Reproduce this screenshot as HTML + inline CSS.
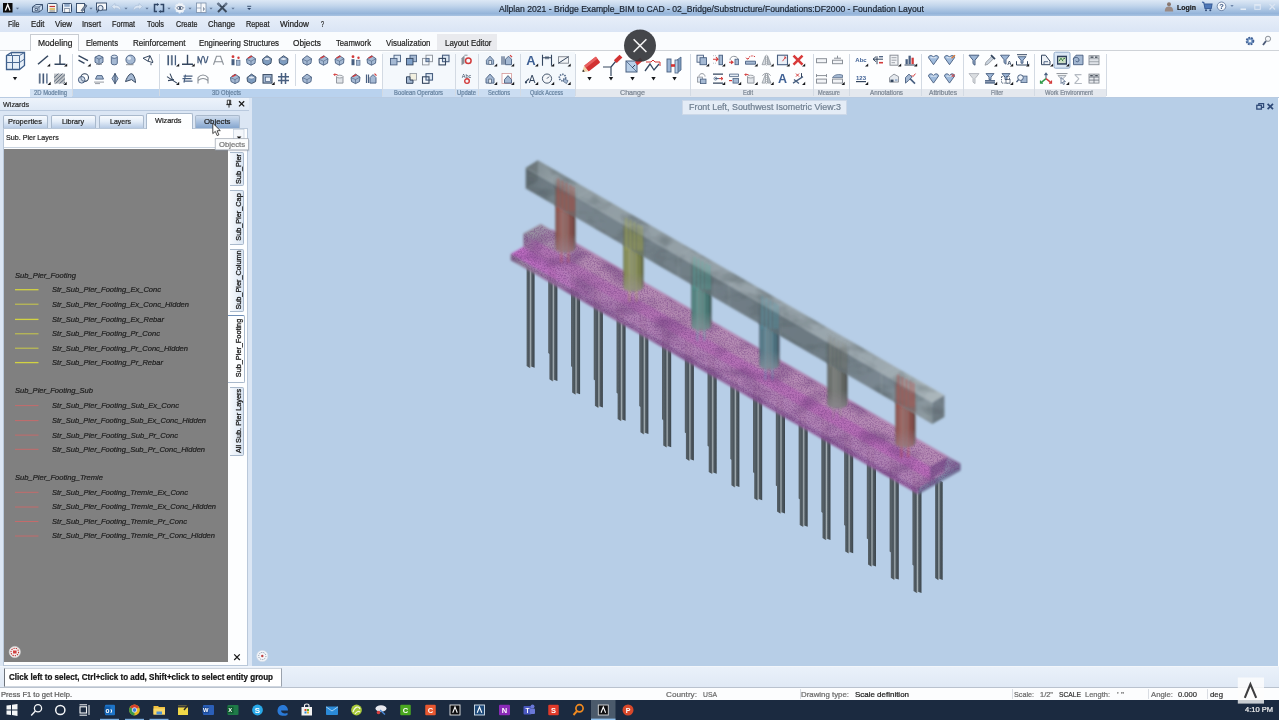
<!DOCTYPE html>
<html><head><meta charset="utf-8"><title>Allplan 2021</title>
<style>
html,body{margin:0;padding:0;}
body{width:1279px;height:720px;overflow:hidden;position:relative;background:#fff;font-family:"Liberation Sans", sans-serif;}
.t{position:absolute;white-space:pre;transform-origin:left center;-webkit-text-stroke:0.22px currentColor;}
.a{position:absolute;}

#title{left:0;top:0;width:1279px;height:16px;background:linear-gradient(#dde8f5 0%,#c3d6ec 35%,#94b4da 85%,#a9c3e2 100%);}
#menu{left:0;top:16px;width:1279px;height:16px;background:linear-gradient(#e7eef9,#dae5f5);}
#tabrow{left:0;top:32px;width:1279px;height:19px;background:#fafcfe;border-bottom:1px solid #cfd3d8;box-sizing:border-box;}
#ribbon{left:0;top:51px;width:1279px;height:46px;background:#fdfeff;}
#riblabel1{left:30px;top:89px;width:42px;height:8px;background:#d2e2f4;}
#riblabel1b{left:72px;top:89px;width:310px;height:8px;background:#b9d2ee;}
#riblabel1c{left:382px;top:89px;width:193px;height:8px;background:#cbddf2;}
#grpbg{left:382px;top:52px;width:193px;height:37px;background:#f4f8fc;}
#riblabel2{left:575px;top:89px;width:531px;height:8px;background:#e4e8ee;}
#ribbot{left:0;top:97px;width:1279px;height:1px;background:#b8cbe2;}
.sep{position:absolute;top:54px;width:1px;height:42px;background:#d3dae3;}
#tabM{left:30px;top:34px;width:49px;height:17px;background:#fdfeff;border:1px solid #c8ccd2;border-bottom:none;box-sizing:border-box;}
#tabL{left:437px;top:34px;width:60px;height:16px;background:#e9eaee;}
#view{left:251.5px;top:98px;width:1026.5px;height:567.7px;background:#b7cee7;}
#viewlbl{left:682px;top:99.5px;width:165px;height:15px;background:#e4ecf6;border:1px solid #ccd8e8;box-sizing:border-box;}
#panel{left:0;top:98px;width:252px;height:570px;background:#dbe6f4;}
#phead{left:0;top:98px;width:248.5px;height:12.5px;background:linear-gradient(#edf3fb,#dfe9f6);border-bottom:1px solid #b9c9de;box-sizing:border-box;}
#pbody{left:3px;top:128px;width:244.5px;height:538px;background:#fdfeff;border:1px solid #b9c8da;box-sizing:border-box;}
.ptab{position:absolute;top:115px;height:13px;border:1px solid #a9b9cc;border-bottom:none;border-radius:2px 2px 0 0;box-sizing:border-box;background:linear-gradient(#f8fbfe 0%,#e4edf8 45%,#b7cbe5 100%);}
#gray{left:4px;top:149px;width:224px;height:513px;background:#808080;}
#drop{left:4px;top:129px;width:240px;height:18px;background:#fff;border-bottom:1px solid #c9d3df;}
.vtab{position:absolute;left:230px;width:14px;border:1px solid #a9b9cc;border-left:none;border-radius:0 2px 2px 0;box-sizing:border-box;background:#fbfcfe;}
.vt{position:absolute;white-space:pre;font-size:7.3px;color:#1c1c1c;transform-origin:left top;-webkit-text-stroke:0.3px #1c1c1c;}
#status{left:0;top:665.7px;width:1279px;height:21.3px;background:linear-gradient(#eaf1fa,#e0e9f5);border-top:1.5px solid #f2f6fb;box-sizing:border-box;}
#stbox{left:4px;top:667.5px;width:278px;height:19px;background:#fff;border:1px solid #cfd6df;border-left:1.2px solid #6e747c;border-right:1px solid #9aa2ad;box-sizing:border-box;}
#help{left:0;top:686.6px;width:1279px;height:13.4px;background:#fcfdfe;border-top:1px solid #b9c2ce;box-sizing:border-box;}
.hsep{position:absolute;top:689px;width:1px;height:10px;background:#d9dde3;}
#task{left:0;top:700px;width:1279px;height:20px;background:#1b2a40;}

</style></head><body>
<div class="a" id="title" style=""></div>
<div class="a" id="menu" style=""></div>
<div class="a" id="tabrow" style=""></div>
<div class="a" id="ribbon" style=""></div>
<div class="a" id="grpbg" style=""></div>
<div class="a" id="riblabel1" style=""></div>
<div class="a" id="riblabel1b" style=""></div>
<div class="a" id="riblabel1c" style=""></div>
<div class="a" id="riblabel2" style=""></div>
<div class="a" id="ribbot" style=""></div>
<div class="sep" style="left:71.5px"></div>
<div class="sep" style="left:158.5px"></div>
<div class="sep" style="left:382px"></div>
<div class="sep" style="left:455px"></div>
<div class="sep" style="left:478px"></div>
<div class="sep" style="left:519.5px"></div>
<div class="sep" style="left:574.5px"></div>
<div class="sep" style="left:690px"></div>
<div class="sep" style="left:812.5px"></div>
<div class="sep" style="left:849px"></div>
<div class="sep" style="left:921px"></div>
<div class="sep" style="left:962.5px"></div>
<div class="sep" style="left:1034px"></div>
<div class="sep" style="left:1106px"></div>
<div class="sep" style="left:294.5px;height:32px"></div>
<div class="a" id="tabL" style=""></div>
<div class="a" id="tabM" style=""></div>
<svg class="a" style="left:0;top:48px;filter:blur(0.35px)" width="1279" height="50" viewBox="0 48 1279 50"><g transform="translate(15.5,61.5) scale(1.0)"><path d="M-9 -6 L-4 -9 H9 V4 L4 8 H-9Z" fill="#e8f0f9" stroke="#3e5f8c" stroke-width="1.3"/><path d="M-9 -6 H4 V8 M4 -6 L9 -9 M-9 1 H4 L9 -2.5 M-3 -6 V8 M-4 -9 V-6" stroke="#4a6a94" stroke-width="1" fill="none"/></g><path d="M12.8 76.9 H17.2 L15 80.2Z" fill="#16181c"/><g transform="translate(43,60.2) scale(1.0)"><path d="M-5 4 L5 -4.5" stroke="#34465f" stroke-width="1.5" fill="none"/></g><path d="M50.2 63.400000000000006 V66.60000000000001 H47Z" fill="#16181c"/><g transform="translate(60,60.2) scale(1.0)"><path d="M-5.5 4 H5.5 M0 -5.5 V4" stroke="#34465f" stroke-width="1.4" fill="none"/></g><path d="M67.2 63.400000000000006 V66.60000000000001 H64Z" fill="#16181c"/><g transform="translate(43.5,78.6) scale(1.0)"><path d="M-3.6 -5 V5 M0 -5 V5 M3.4 -5 V5" stroke="#485f80" stroke-width="1.3" fill="none"/><path d="M-4.3 -5 V5 M-0.7 -5 V5" stroke="#34465f" stroke-width="0.5"/></g><path d="M50.7 81.8 V85.0 H47.5Z" fill="#16181c"/><g transform="translate(59.5,78.6) scale(1.0)"><rect x="-5.5" y="-5" width="11" height="10" fill="#8a9098" opacity="0.55"/><path d="M-5.5 -1 L-1 -5 M-5.5 3 L3 -5 M-4 5 L5.5 -4 M0 5 L5.5 0 M4 5 L5.5 3.5" stroke="#34465f" stroke-width="0.7"/></g><path d="M66.7 81.8 V85.0 H63.5Z" fill="#16181c"/><g transform="translate(83.5,60.2) scale(1.0)"><path d="M-5 -4.5 L4.5 0.5 M-5 0 L1 3.2" stroke="#34465f" stroke-width="1.4" fill="none"/></g><path d="M90.7 63.400000000000006 V66.60000000000001 H87.5Z" fill="#16181c"/><g transform="translate(99,60.2) scale(1.0)"><path d="M-4 -3 L0 -5 L4 -3 V2 L0 4.5 L-4 2Z" fill="#a5b9d3" stroke="#485f80" stroke-width="0.9"/><path d="M-4 -3 L0 -1 L4 -3 M0 -1 V4.5" stroke="#485f80" stroke-width="0.7" fill="none"/><path d="M-3 4 H3" stroke="#8a9098" stroke-width="1"/></g><g transform="translate(114.3,60.2) scale(1.0)"><path d="M-3 -3.5 V3 A3 1.6 0 0 0 3 3 V-3.5" fill="#a5b9d3" stroke="#485f80" stroke-width="0.9"/><ellipse cx="0" cy="-3.5" rx="3" ry="1.6" fill="#d6e3f2" stroke="#485f80" stroke-width="0.9"/></g><g transform="translate(130.5,60.2) scale(1.0)"><circle cx="0" cy="-0.5" r="4.6" fill="#a5b9d3" stroke="#485f80" stroke-width="0.9"/><circle cx="-1.3" cy="-2" r="1.8" fill="#e6eef8"/><path d="M-4.5 4.5 H3" stroke="#8a9098" stroke-width="1"/></g><g transform="translate(148,60.2) scale(1.0)"><path d="M-5 -2 L2 -4.5 L5 2 M2 -4.5 L0 1 M-5 -2 L0 1 L5 2.5 M3 3 V5" stroke="#34465f" stroke-width="1" fill="none"/></g><g transform="translate(83.5,78.6) scale(1.0)"><circle cx="1.2" cy="-1" r="3.8" fill="none" stroke="#34465f" stroke-width="1.1"/><circle cx="-1.8" cy="1.2" r="3.3" fill="#a5b9d3" fill-opacity="0.5" stroke="#485f80" stroke-width="1"/></g><g transform="translate(99,78.6) scale(1.0)"><path d="M-2 -3 H3 L4.5 0.5 H-3.5Z" fill="#a5b9d3" stroke="#485f80" stroke-width="0.9"/><path d="M-5 3.5 H5 M-4 5 H1" stroke="#8a9098" stroke-width="0.9"/></g><g transform="translate(115,78.6) scale(1.0)"><path d="M0 -5 L3 0 L0 5 L-3 0Z" fill="#a5b9d3" stroke="#485f80" stroke-width="0.9"/><path d="M0 -5.5 V5.5" stroke="#34465f" stroke-width="1"/></g><g transform="translate(130.5,78.6) scale(1.0)"><path d="M-5 3 C-3 -3 0 -6 2 -4.5 C4 -2 5 1 5 4 L1 1Z" fill="#a5b9d3" stroke="#34465f" stroke-width="1"/></g><g transform="translate(172,60.2) scale(1.0)"><path d="M-3.6 -5 V5 M0 -5 V5 M3.4 -5 V5" stroke="#485f80" stroke-width="1.3" fill="none"/><path d="M-4.3 -5 V5 M-0.7 -5 V5" stroke="#34465f" stroke-width="0.5"/></g><path d="M179.2 63.400000000000006 V66.60000000000001 H176Z" fill="#16181c"/><g transform="translate(187.5,60.2) scale(1.0)"><path d="M-5.5 4 H5.5 M0 -5.5 V4" stroke="#34465f" stroke-width="1.4" fill="none"/></g><path d="M194.7 63.400000000000006 V66.60000000000001 H191.5Z" fill="#16181c"/><g transform="translate(203,60.2) scale(1.0)"><path d="M-5 3 V-4 L-2 3 C-1 -6 1 -6 2 2 C3 4 4 0 5 -4" stroke="#485f80" stroke-width="1.2" fill="none"/></g><g transform="translate(218.5,60.2) scale(1.0)"><path d="M-5 4.5 L-2 -4 H2 L5 4.5 M-3.5 1.5 H3.5" stroke="#8a9098" stroke-width="1.1" fill="none"/></g><g transform="translate(235.5,60.2) scale(1.0)"><rect x="-4" y="-1" width="3" height="6" fill="#485f80"/><rect x="1" y="0" width="3.5" height="5" fill="#a5b9d3" stroke="#485f80" stroke-width="0.6"/><circle cx="-2.5" cy="-3.5" r="1.4" fill="#d23a3a"/><circle cx="3" cy="-2.5" r="1.2" fill="#d23a3a"/></g><g transform="translate(251,60.2) scale(1.0)"><path d="M-4.5 -1 L0 -4.5 L4.5 -1.5 L4 3 L0 5 L-4 3Z" fill="#a5b9d3" stroke="#485f80" stroke-width="0.9"/><path d="M-4.5 -1 L0 1 L4.5 -1.5 M0 1 V5" stroke="#485f80" stroke-width="0.6" fill="none"/><path d="M-3 -2 L1 -4" stroke="#d23a3a" stroke-width="1.3"/></g><g transform="translate(267,60.2) scale(1.0)"><path d="M-4.5 -1 L0 -4.5 L4.5 -1.5 L4 3 L0 5 L-4 3Z" fill="#7f9dc0" stroke="#34465f" stroke-width="0.9"/><ellipse cx="0" cy="-1.2" rx="3" ry="1.5" fill="#dfe9f5" stroke="#485f80" stroke-width="0.5"/></g><g transform="translate(283.5,60.2) scale(1.0)"><path d="M-4.5 -1 L0 -4.5 L4.5 -1.5 L4 3 L0 5 L-4 3Z" fill="#7f9dc0" stroke="#34465f" stroke-width="0.9"/><ellipse cx="0" cy="-1.2" rx="3" ry="1.5" fill="#dfe9f5" stroke="#485f80" stroke-width="0.5"/></g><g transform="translate(172,78.6) scale(1.0)"><path d="M-5 -2 L5 4.5 M-2 -5 L1 2 M-4 2 L2 1" stroke="#34465f" stroke-width="1.1" fill="none"/></g><path d="M179.2 81.8 V85.0 H176Z" fill="#16181c"/><g transform="translate(187.5,78.6) scale(1.0)"><path d="M-4 -2.5 H5 M-5 0 H4 M-4 2.5 H5 M-2 -4 L-3.5 4" stroke="#485f80" stroke-width="1.1" fill="none"/></g><g transform="translate(203,78.6) scale(1.0)"><path d="M-5 -1 C-2 -4.5 2 -4.5 5 -1 M-5 2 C-2 -0.5 2 -0.5 5 2 M-5 -1 V5 M5 -1 V5" stroke="#8a9098" stroke-width="1.1" fill="none"/></g><g transform="translate(235,78.6) scale(1.0)"><path d="M-4.5 -1 L0 -4.5 L4.5 -1.5 L4 3 L0 5 L-4 3Z" fill="#a5b9d3" stroke="#485f80" stroke-width="0.9"/><path d="M-4.5 -1 L0 1 L4.5 -1.5 M0 1 V5" stroke="#485f80" stroke-width="0.6" fill="none"/><path d="M-3 -2 L1 -4" stroke="#d23a3a" stroke-width="1.3"/></g><g transform="translate(251.5,78.6) scale(1.0)"><path d="M-4.5 -1 L0 -4.5 L4.5 -1.5 L4 3 L0 5 L-4 3Z" fill="#7f9dc0" stroke="#34465f" stroke-width="0.9"/><ellipse cx="0" cy="-1.2" rx="3" ry="1.5" fill="#dfe9f5" stroke="#485f80" stroke-width="0.5"/></g><g transform="translate(267.5,78.6) scale(1.0)"><rect x="-4.5" y="-4" width="9" height="8.5" fill="#a5b9d3" stroke="#34465f" stroke-width="1"/><rect x="-2" y="-1.5" width="5" height="4.5" fill="#e8eef6" stroke="#485f80" stroke-width="0.7"/></g><path d="M274.7 81.8 V85.0 H271.5Z" fill="#16181c"/><g transform="translate(283.5,78.6) scale(1.0)"><path d="M-5.5 -1.8 H5.5 M-5.5 2 H5.5 M-2 -5.5 V5.5 M2 -5.5 V5.5" stroke="#485f80" stroke-width="1.5" fill="none"/></g><g transform="translate(307,60.2) scale(1.0)"><path d="M-4.5 -1 L0 -4.5 L4.5 -1.5 L4 3 L0 5 L-4 3Z" fill="#a5b9d3" stroke="#485f80" stroke-width="0.9"/><path d="M-4.5 -1 L0 1 L4.5 -1.5 M0 1 V5" stroke="#485f80" stroke-width="0.6" fill="none"/></g><g transform="translate(323.5,60.2) scale(1.0)"><path d="M-4.5 -1 L0 -4.5 L4.5 -1.5 L4 3 L0 5 L-4 3Z" fill="#a5b9d3" stroke="#485f80" stroke-width="0.9"/><path d="M-4.5 -1 L0 1 L4.5 -1.5 M0 1 V5" stroke="#485f80" stroke-width="0.6" fill="none"/><path d="M-3 -2 L1 -4" stroke="#d23a3a" stroke-width="1.3"/></g><g transform="translate(339.5,60.2) scale(1.0)"><path d="M-4.5 -1 L0 -4.5 L4.5 -1.5 L4 3 L0 5 L-4 3Z" fill="#a5b9d3" stroke="#485f80" stroke-width="0.9"/><path d="M-4.5 -1 L0 1 L4.5 -1.5 M0 1 V5" stroke="#485f80" stroke-width="0.6" fill="none"/><path d="M-3 -2 L1 -4" stroke="#d23a3a" stroke-width="1.3"/></g><g transform="translate(355.5,60.2) scale(1.0)"><rect x="-4" y="-1" width="3" height="6" fill="#485f80"/><rect x="1" y="0" width="3.5" height="5" fill="#a5b9d3" stroke="#485f80" stroke-width="0.6"/><circle cx="-2.5" cy="-3.5" r="1.4" fill="#d23a3a"/><circle cx="3" cy="-2.5" r="1.2" fill="#d23a3a"/></g><g transform="translate(371.5,60.2) scale(1.0)"><path d="M-4.5 -1 L0 -4.5 L4.5 -1.5 L4 3 L0 5 L-4 3Z" fill="#a5b9d3" stroke="#485f80" stroke-width="0.9"/><path d="M-4.5 -1 L0 1 L4.5 -1.5 M0 1 V5" stroke="#485f80" stroke-width="0.6" fill="none"/><path d="M-3 -2 L1 -4" stroke="#d23a3a" stroke-width="1.3"/></g><g transform="translate(307,78.6) scale(1.0)"><path d="M-4.5 -1 L0 -4.5 L4.5 -1.5 L4 3 L0 5 L-4 3Z" fill="#a5b9d3" stroke="#485f80" stroke-width="0.9"/><path d="M-4.5 -1 L0 1 L4.5 -1.5 M0 1 V5" stroke="#485f80" stroke-width="0.6" fill="none"/></g><g transform="translate(339.5,78.6) scale(1.0)"><path d="M-3 -2 V4.5 H3.5 V-2" fill="#dfe3e8" stroke="#8a9098" stroke-width="0.9"/><ellipse cx="0.2" cy="-2" rx="3.3" ry="1.4" fill="#f0f2f5" stroke="#8a9098" stroke-width="0.8"/><path d="M-5.5 -4 H-2 M-4.5 -5.2 L-5.7 -4 L-4.5 -2.8" stroke="#d23a3a" stroke-width="1" fill="none"/></g><g transform="translate(355.5,78.6) scale(1.0)"><path d="M-4.5 -1 L0 -4.5 L4.5 -1.5 L4 3 L0 5 L-4 3Z" fill="#a5b9d3" stroke="#485f80" stroke-width="0.9"/><path d="M-4.5 -1 L0 1 L4.5 -1.5 M0 1 V5" stroke="#485f80" stroke-width="0.6" fill="none"/><path d="M-3 -2 L1 -4" stroke="#d23a3a" stroke-width="1.3"/></g><g transform="translate(371.5,78.6) scale(1.0)"><path d="M-5 -4 V4.5 M-3 -4 V4.5" stroke="#485f80" stroke-width="1.2"/><path d="M-1.5 -1 L1.5 -4 L4.5 -1 V4.5 H-1.5Z" fill="#a5b9d3" stroke="#485f80" stroke-width="0.9"/><path d="M3 -5 L5 -3" stroke="#d23a3a" stroke-width="1.2"/></g><g transform="translate(395.5,60.2) scale(1.0)"><rect x="-1.5" y="-5" width="6.5" height="6.5" fill="#dde8f4" stroke="#485f80" stroke-width="0.9"/><rect x="-5" y="-1.8" width="6.5" height="6.5" fill="#a5b9d3" stroke="#485f80" stroke-width="0.9"/></g><g transform="translate(411.5,60.2) scale(1.0)"><rect x="-1.5" y="-5" width="6.5" height="6.5" fill="#a5b9d3" stroke="#485f80" stroke-width="0.9"/><rect x="-5" y="-1.8" width="6.5" height="6.5" fill="#7fa0c8" stroke="#34465f" stroke-width="0.9"/></g><g transform="translate(427.5,60.2) scale(1.0)"><rect x="-1.5" y="-5" width="6.5" height="6.5" fill="none" stroke="#8a9098" stroke-width="0.9"/><rect x="-5" y="-1.8" width="6.5" height="6.5" fill="none" stroke="#8a9098" stroke-width="0.9"/><rect x="-1.5" y="-1.8" width="3" height="3.3" fill="#a5b9d3" stroke="#485f80" stroke-width="0.7"/></g><g transform="translate(444,60.2) scale(1.0)"><rect x="-1.5" y="-5" width="6.5" height="6.5" fill="#dde8f4" stroke="#485f80" stroke-width="1.1"/><rect x="-5" y="-1.8" width="6.5" height="6.5" fill="none" stroke="#34465f" stroke-width="1.1"/></g><g transform="translate(411.5,78.6) scale(1.0)"><rect x="-1.5" y="-5" width="6.5" height="6.5" fill="#f2f0e0" stroke="#8a9098" stroke-width="0.8"/><path d="M-5 -1.8 H-1.5 V1.5 H1.5 V4.7 H-5Z" fill="#a5b9d3" stroke="#34465f" stroke-width="1"/></g><g transform="translate(427.5,78.6) scale(1.0)"><rect x="-1.5" y="-5" width="6.5" height="6.5" fill="#dde8f4" stroke="#485f80" stroke-width="1.1"/><rect x="-5" y="-1.8" width="6.5" height="6.5" fill="none" stroke="#34465f" stroke-width="1.1"/></g><g transform="translate(466.5,60.2) scale(1.0)"><path d="M-5 -2 L-2 -5 V3 L-5 5Z" fill="#8a9098"/><path d="M-2 -5 H1" stroke="#8a9098"/><circle cx="1.8" cy="0.5" r="2.8" fill="none" stroke="#d23a3a" stroke-width="1.5"/></g><g transform="translate(466.5,78.6) scale(1.0)"><text x="0" y="-1" font-size="5.5" text-anchor="middle" fill="#34465f" font-family="Liberation Sans, sans-serif">Abc</text><circle cx="0.5" cy="2.5" r="2.3" fill="none" stroke="#d23a3a" stroke-width="1.4"/></g><g transform="translate(490,60.2) scale(0.9)"><path d="M-4 0 L0 -4.5 L4 0 V4.5 H-4Z" fill="#a5b9d3" stroke="#485f80" stroke-width="0.9"/><rect x="-1.2" y="0.5" width="2.6" height="4" fill="#eef3f9" stroke="#34465f" stroke-width="0.6"/></g><path d="M497.2 63.400000000000006 V66.60000000000001 H494Z" fill="#16181c"/><g transform="translate(507,60.2) scale(1.0)"><path d="M-5 -4 V4.5 M-3 -4 V4.5" stroke="#485f80" stroke-width="1.2"/><path d="M-1.5 -1 L1.5 -4 L4.5 -1 V4.5 H-1.5Z" fill="#a5b9d3" stroke="#485f80" stroke-width="0.9"/><path d="M3 -5 L5 -3" stroke="#d23a3a" stroke-width="1.2"/></g><path d="M514.2 63.400000000000006 V66.60000000000001 H511Z" fill="#16181c"/><g transform="translate(490,78.6) scale(1.0)"><path d="M-4 0 L0 -4.5 L4 0 V4.5 H-4Z" fill="#a5b9d3" stroke="#485f80" stroke-width="0.9"/><rect x="-1.2" y="0.5" width="2.6" height="4" fill="#eef3f9" stroke="#34465f" stroke-width="0.6"/></g><path d="M497.2 81.8 V85.0 H494Z" fill="#16181c"/><g transform="translate(507,78.6) scale(1.0)"><rect x="-5" y="-5" width="9.5" height="10" fill="#fff" stroke="#d08a8a" stroke-width="0.7"/><path d="M-2.5 1 L1 -3 L4.5 1 V4.5 H-2.5Z" fill="#a5b9d3" stroke="#485f80" stroke-width="0.9"/></g><path d="M514.2 81.8 V85.0 H511Z" fill="#16181c"/><g transform="translate(531,60.2) scale(1.0)"><text x="0" y="4.6" font-size="13" font-weight="bold" text-anchor="middle" fill="#3d5f94" font-family="Liberation Sans, sans-serif">A</text></g><path d="M538.2 63.400000000000006 V66.60000000000001 H535Z" fill="#16181c"/><g transform="translate(547,60.2) scale(1.0)"><path d="M-4.5 -5.5 V5.5 M4.5 -5.5 V5.5 M-4.5 -2.5 H4.5 M-1 -4 V-1 M1 -4 V-1" stroke="#34465f" stroke-width="1.1" fill="none"/></g><path d="M554.2 63.400000000000006 V66.60000000000001 H551Z" fill="#16181c"/><g transform="translate(563.5,60.2) scale(1.0)"><rect x="-5" y="-3.5" width="10" height="6.5" fill="#f2f4f7" stroke="#8a9098" stroke-width="1"/><path d="M-5 3 L5 -3.5" stroke="#34465f" stroke-width="1"/></g><path d="M570.7 63.400000000000006 V66.60000000000001 H567.5Z" fill="#16181c"/><g transform="translate(531,78.6) scale(1.0)"><text x="1" y="4.2" font-size="10" text-anchor="middle" fill="#34465f" font-family="Liberation Sans, sans-serif">A</text><path d="M-5.5 3.5 L-2 0" stroke="#34465f" stroke-width="1.2"/><circle cx="-5" cy="3.8" r="1.1" fill="#34465f"/></g><path d="M538.2 81.8 V85.0 H535Z" fill="#16181c"/><g transform="translate(547,78.6) scale(1.0)"><circle cx="0" cy="0" r="4.6" fill="#f4f6f9" stroke="#34465f" stroke-width="0.9"/><path d="M0 0 L2 -2" stroke="#34465f" stroke-width="1"/></g><path d="M554.2 81.8 V85.0 H551Z" fill="#16181c"/><g transform="translate(563.5,78.6) scale(1.0)"><circle cx="-1" cy="-1" r="3.2" fill="none" stroke="#485f80" stroke-width="1.6" stroke-dasharray="1.4 1"/><path d="M0 0 L4.5 2 L3 5 L0 3Z" fill="#a5b9d3" stroke="#485f80" stroke-width="0.7"/></g><path d="M570.7 81.8 V85.0 H567.5Z" fill="#16181c"/><g transform="translate(591,65) scale(1.0)"><g transform="rotate(-38)"><rect x="-6" y="-3.6" width="15" height="7.2" rx="1" fill="#d23232"/><rect x="-6" y="-3.6" width="15" height="2.6" fill="#e86060"/><path d="M-6 -3.6 L-11 0 L-6 3.6Z" fill="#f0d2a8"/><path d="M-9 -1.4 L-11 0 L-9 1.4Z" fill="#222"/></g></g><path d="M587.3 77.1 H591.7 L589.5 80.39999999999999Z" fill="#16181c"/><g transform="translate(611,66) scale(1.0)"><path d="M-8 1 H0 V10 M0 1 L5 -5" stroke="#34465f" stroke-width="1.2" fill="none"/><g transform="translate(5,-5) rotate(-45)"><rect x="-1" y="-2" width="8" height="4" fill="#d23232"/></g></g><path d="M608.8 77.1 H613.2 L611 80.39999999999999Z" fill="#16181c"/><g transform="translate(634,66) scale(1.0)"><rect x="-8" y="-5" width="11" height="11" fill="#b8cfe8" stroke="#485f80" stroke-width="1"/><path d="M-8 -5 L3 6" stroke="#485f80" stroke-width="0.8"/><g transform="translate(3,-3) rotate(-40)"><rect x="-1" y="-2" width="7" height="4" fill="#d23232"/></g><path d="M1 -1 L-2 2" stroke="#34465f" stroke-width="1"/></g><path d="M630.3 77.1 H634.7 L632.5 80.39999999999999Z" fill="#16181c"/><g transform="translate(653,67) scale(1.0)"><path d="M-8 4 L-3 -3 L1 3 L6 -3" stroke="#34465f" stroke-width="1.3" fill="none"/><path d="M-7 -5 H-2 L0 -7 L2 -5 H7 V-1" stroke="#d23232" stroke-width="1" fill="none"/></g><path d="M651.3 77.1 H655.7 L653.5 80.39999999999999Z" fill="#16181c"/><g transform="translate(675,65) scale(1.0)"><rect x="-8" y="-6" width="4" height="13" fill="#9db6d6" stroke="#485f80" stroke-width="0.9"/><path d="M2 -5 L6 -8 V5 L2 8Z" fill="#7f9dc0" stroke="#485f80" stroke-width="0.8"/><rect x="0" y="-5" width="3" height="13" fill="#b8cfe8" stroke="#485f80" stroke-width="0.8"/><path d="M-4 0.5 H0" stroke="#d23232" stroke-width="2.6"/></g><path d="M672.3 77.1 H676.7 L674.5 80.39999999999999Z" fill="#16181c"/><g transform="translate(702,60.2) scale(1.0)"><rect x="-5" y="-5" width="6.5" height="7" fill="#e6edf6" stroke="#485f80" stroke-width="0.9"/><rect x="-2" y="-2.5" width="6.5" height="7" fill="#a5b9d3" stroke="#485f80" stroke-width="0.9"/></g><path d="M709.2 63.400000000000006 V66.60000000000001 H706Z" fill="#16181c"/><g transform="translate(718,60.2) scale(1.0)"><rect x="1" y="-5" width="3.5" height="9.5" fill="#a5b9d3" stroke="#485f80" stroke-width="0.9"/><path d="M-5 -1 H0 M-2 -3 L0 -1 L-2 1" stroke="#d23a3a" stroke-width="1.1" fill="none"/><path d="M-5 -4.5 H-1 M-5 3 H-1" stroke="#8a9098" stroke-width="0.6" stroke-dasharray="1 1"/></g><path d="M725.2 63.400000000000006 V66.60000000000001 H722Z" fill="#16181c"/><g transform="translate(734,60.2) scale(1.0)"><path d="M-4 0 C-4 -5 3 -5 4 -1" stroke="#8a9098" stroke-width="1" fill="none"/><rect x="1" y="-1" width="3.5" height="5.5" fill="#a5b9d3" stroke="#485f80" stroke-width="0.8"/><path d="M-5 2 H-1 M-3 0.5 L-1 2 L-3 3.5" stroke="#d23a3a" stroke-width="1.1" fill="none"/></g><g transform="translate(750.5,60.2) scale(1.0)"><path d="M-5 1 H5 V4 H-5Z" fill="#a5b9d3" stroke="#485f80" stroke-width="0.9"/><path d="M-3 -1 C-1 -5 3 -5 5 -3" stroke="#d23a3a" stroke-width="1" fill="none" stroke-dasharray="1.5 1"/><path d="M-4.5 -2.5 L-3 -1 L-1.5 -2" stroke="#d23a3a" stroke-width="1" fill="none"/></g><path d="M757.7 63.400000000000006 V66.60000000000001 H754.5Z" fill="#16181c"/><g transform="translate(766.5,60.2) scale(1.0)"><path d="M-1 -4.5 L-4.5 4.5 H-1Z" fill="#d7dbe0" stroke="#8a9098" stroke-width="0.7"/><path d="M1 -4.5 L4.5 4.5 H1Z" fill="#b9bfc6" stroke="#8a9098" stroke-width="0.7"/><path d="M0 -5.5 V5.5" stroke="#8a9098" stroke-width="0.6" stroke-dasharray="1 1"/></g><path d="M773.7 63.400000000000006 V66.60000000000001 H770.5Z" fill="#16181c"/><g transform="translate(782.5,60.2) scale(1.0)"><rect x="-5" y="-5" width="10" height="9.5" fill="#eaf0f7" stroke="#485f80" stroke-width="1.1"/><path d="M0 1 L3 -3 M1.5 -3.2 H3.2 V-1.5" stroke="#d23a3a" stroke-width="0.9" fill="none"/></g><path d="M789.7 63.400000000000006 V66.60000000000001 H786.5Z" fill="#16181c"/><g transform="translate(798,60.2) scale(1.0)"><path d="M-4.5 -4.5 L4.5 4.5 M4.5 -4.5 L-4.5 4.5" stroke="#d83a3a" stroke-width="2.6" fill="none"/></g><path d="M805.2 63.400000000000006 V66.60000000000001 H802Z" fill="#16181c"/><g transform="translate(702,78.6) scale(1.0)"><path d="M-3 -2 C-3 -6 3 -6 3 -2" stroke="#8a9098" stroke-width="0.9" fill="none"/><rect x="-4.5" y="-1.5" width="5" height="5" fill="#dfe7f1" stroke="#8a9098" stroke-width="0.8"/><rect x="-1.5" y="0.5" width="5.5" height="4.5" fill="#a5b9d3" stroke="#485f80" stroke-width="0.8"/></g><g transform="translate(718,78.6) scale(1.0)"><path d="M-5 -4.5 H5 M-5 4.5 H5" stroke="#34465f" stroke-width="1.3"/><path d="M-3 0 H1" stroke="#485f80" stroke-width="1"/><path d="M1 0 H5 M3 -1.5 L5 0 L3 1.5" stroke="#d23a3a" stroke-width="1" fill="none"/><circle cx="-2.5" cy="0" r="1.5" fill="none" stroke="#485f80" stroke-width="0.7"/></g><path d="M725.2 81.8 V85.0 H722Z" fill="#16181c"/><g transform="translate(734,78.6) scale(1.0)"><path d="M-4.5 -4.5 H4.5 V-2 H-4.5Z" fill="#e6edf6" stroke="#485f80" stroke-width="0.8"/><rect x="-1" y="0" width="5.5" height="4.5" fill="#a5b9d3" stroke="#485f80" stroke-width="0.8"/><path d="M-5 2 H-2" stroke="#d23a3a" stroke-width="1.2"/></g><path d="M741.2 81.8 V85.0 H738Z" fill="#16181c"/><g transform="translate(750.5,78.6) scale(1.0)"><path d="M-3 -2 V4.5 H3.5 V-2" fill="#dfe3e8" stroke="#8a9098" stroke-width="0.9"/><ellipse cx="0.2" cy="-2" rx="3.3" ry="1.4" fill="#f0f2f5" stroke="#8a9098" stroke-width="0.8"/><path d="M-5.5 -4 H-2 M-4.5 -5.2 L-5.7 -4 L-4.5 -2.8" stroke="#d23a3a" stroke-width="1" fill="none"/></g><path d="M757.7 81.8 V85.0 H754.5Z" fill="#16181c"/><g transform="translate(766.5,78.6) scale(1.0)"><path d="M-1 -4.5 L-4.5 4.5 H-1Z" fill="#d7dbe0" stroke="#8a9098" stroke-width="0.7"/><path d="M1 -4.5 L4.5 4.5 H1Z" fill="#b9bfc6" stroke="#8a9098" stroke-width="0.7"/><path d="M0 -5.5 V5.5" stroke="#8a9098" stroke-width="0.6" stroke-dasharray="1 1"/><path d="M-4 -3 C-2 -6 2 -6 4 -3" stroke="#8a9098" stroke-width="1" fill="none"/></g><path d="M773.7 81.8 V85.0 H770.5Z" fill="#16181c"/><g transform="translate(782.5,78.6) scale(1.0)"><text x="0" y="4.6" font-size="12.5" font-weight="bold" text-anchor="middle" fill="#3d5f94" font-family="Liberation Sans, sans-serif">A</text></g><g transform="translate(798,78.6) scale(1.0)"><path d="M-5 4.5 L5 -2 M-4 1 L1 5" stroke="#485f80" stroke-width="1.3"/><path d="M-2 -5 L1 -2 M1 -5 L-2 -2" stroke="#d23a3a" stroke-width="1"/><path d="M3.5 -5.5 V-1.5" stroke="#34465f" stroke-width="1"/></g><path d="M805.2 81.8 V85.0 H802Z" fill="#16181c"/><g transform="translate(821.5,60.2) scale(1.0)"><rect x="-5" y="-1.5" width="10" height="4" fill="#f2f4f7" stroke="#8a9098" stroke-width="1"/></g><g transform="translate(837.5,60.2) scale(1.0)"><rect x="-5" y="0" width="10" height="3.5" fill="#f2f4f7" stroke="#8a9098" stroke-width="1"/><path d="M-3.5 -2 H3.5 M0 -4.5 V-2" stroke="#8a9098" stroke-width="1"/></g><g transform="translate(821.5,78.6) scale(1.0)"><rect x="-5" y="0.5" width="10" height="4" fill="#f2f4f7" stroke="#8a9098" stroke-width="1"/><path d="M-5 -3 H5 M-5 -4.5 V-1.5 M5 -4.5 V-1.5" stroke="#8a9098" stroke-width="1"/></g><g transform="translate(837.5,78.6) scale(1.0)"><path d="M-5 -1 C-3 -4.5 2 -4.5 5 -3.5 V-1Z" fill="#a5b9d3" stroke="#485f80" stroke-width="0.7"/><rect x="-5" y="0.5" width="10" height="4" fill="#f2f4f7" stroke="#8a9098" stroke-width="1"/></g><path d="M844.7 81.8 V85.0 H841.5Z" fill="#16181c"/><g transform="translate(861,60.2) scale(1.0)"><text x="0" y="1.8" font-size="6" font-weight="bold" text-anchor="middle" fill="#3d5f94" font-family="Liberation Sans, sans-serif">Abc</text></g><path d="M868.2 63.400000000000006 V66.60000000000001 H865Z" fill="#16181c"/><g transform="translate(878,60.2) scale(1.0)"><path d="M-5 -1 H5 M-5 -1 L-2 -3.5 M-5 -1 L-2 1.5 M-1 -4 V4" stroke="#34465f" stroke-width="1"/><path d="M1 -3.5 H5" stroke="#485f80" stroke-width="1.3"/><path d="M1 2.5 H5" stroke="#d23a3a" stroke-width="1.6"/></g><g transform="translate(894,60.2) scale(1.0)"><rect x="-4" y="-5" width="8" height="10" fill="#f0f2f5" stroke="#8a9098" stroke-width="1"/><path d="M-2.5 -2.5 H2.5 M-2.5 0 H2.5 M-2.5 2.5 H1" stroke="#8a9098" stroke-width="0.8"/></g><path d="M901.2 63.400000000000006 V66.60000000000001 H898Z" fill="#16181c"/><g transform="translate(910,60.2) scale(1.0)"><rect x="-4.5" y="-1" width="2.3" height="5" fill="#485f80"/><rect x="-1.5" y="-4.5" width="2.3" height="8.5" fill="#485f80"/><rect x="1.5" y="-2.5" width="2.3" height="6.5" fill="#d23a3a"/><path d="M-5.5 4.8 H5.5" stroke="#34465f" stroke-width="1"/></g><path d="M917.2 63.400000000000006 V66.60000000000001 H914Z" fill="#16181c"/><g transform="translate(861,78.6) scale(1.0)"><text x="0" y="1" font-size="6" font-weight="bold" text-anchor="middle" fill="#3d5f94" font-family="Liberation Sans, sans-serif">123</text><path d="M-5 3 H5" stroke="#34465f" stroke-width="1.2"/></g><path d="M868.2 81.8 V85.0 H865Z" fill="#16181c"/><g transform="translate(894,78.6) scale(1.0)"><path d="M-4.5 -1 L0 -4.5 L4.5 -2 V3.5 H-4.5Z" fill="#e5e9ee" stroke="#8a9098" stroke-width="0.9"/><rect x="-3.5" y="1" width="3" height="2.5" fill="#34465f"/><rect x="1" y="0.5" width="2.5" height="2" fill="#a5b9d3"/></g><g transform="translate(910,78.6) scale(1.0)"><path d="M-4.5 4.5 V-1 L-1 -4.5 L2 -1.5 L-1.5 2Z" fill="#a5b9d3" stroke="#485f80" stroke-width="0.9"/><path d="M0 0 L5 5" stroke="#485f80" stroke-width="1.6"/><path d="M1.5 -3.5 L3 -2 L5.5 -5" stroke="#d23a3a" stroke-width="1" fill="none"/></g><g transform="translate(933.5,60.2) scale(1.0)"><path d="M-5 -2.5 C-5 -5.5 -0.5 -5.5 0 -2.5 C0.5 -5.5 5 -5.5 5 -2.5 L0 4.5Z" fill="#9fbbdc" stroke="#485f80" stroke-width="0.9"/><path d="M-3 -2.5 H3" stroke="#eaf1f9" stroke-width="0.9"/></g><g transform="translate(949.5,60.2) scale(1.0)"><path d="M-5 -2.5 C-5 -5.5 -0.5 -5.5 0 -2.5 C0.5 -5.5 5 -5.5 5 -2.5 L0 4.5Z" fill="#9fbbdc" stroke="#485f80" stroke-width="0.9"/><path d="M-3 -2.5 H3" stroke="#eaf1f9" stroke-width="0.9"/><path d="M2 -2 L5.5 -5" stroke="#d87838" stroke-width="1.5"/></g><g transform="translate(933.5,78.6) scale(1.0)"><path d="M-5 -2.5 C-5 -5.5 -0.5 -5.5 0 -2.5 C0.5 -5.5 5 -5.5 5 -2.5 L0 4.5Z" fill="#9fbbdc" stroke="#485f80" stroke-width="0.9"/><path d="M-3 -2.5 H3" stroke="#eaf1f9" stroke-width="0.9"/></g><g transform="translate(949.5,78.6) scale(1.0)"><path d="M-5 -2.5 C-5 -5.5 -0.5 -5.5 0 -2.5 C0.5 -5.5 5 -5.5 5 -2.5 L0 4.5Z" fill="#9fbbdc" stroke="#485f80" stroke-width="0.9"/><path d="M-3 -2.5 H3" stroke="#eaf1f9" stroke-width="0.9"/><path d="M2 -4.5 L5 -1.5 M5 -4.5 L2 -1.5" stroke="#d23a3a" stroke-width="1"/></g><g transform="translate(974,60.2) scale(1.0)"><path d="M-5 -5 H5 L1 0 V5 L-1 3.5 V0Z" fill="#9db6d6" stroke="#485f80" stroke-width="1"/></g><g transform="translate(990,60.2) scale(1.0)"><path d="M-5 5 L-4 2 L2 -4 L4 -2 L-2 4Z" fill="#c9d3df" stroke="#8a9098" stroke-width="0.8"/><path d="M1 -5 L5 -1" stroke="#34465f" stroke-width="1.8"/></g><path d="M997.2 63.400000000000006 V66.60000000000001 H994Z" fill="#16181c"/><g transform="translate(1006,60.2) scale(1.0)"><path d="M-5.5 -5 H3.5 L0 -0.5 V4 L-2 2.5 V-0.5Z" fill="#9db6d6" stroke="#485f80" stroke-width="0.9"/><text x="3.5" y="5" font-size="6" font-weight="bold" text-anchor="middle" fill="#34465f" font-family="Liberation Sans, sans-serif">A</text></g><path d="M1013.2 63.400000000000006 V66.60000000000001 H1010Z" fill="#16181c"/><g transform="translate(1022,60.2) scale(1.0)"><path d="M-4 -3.5 H4 L1 0 V3 H-1 V0Z" fill="#9db6d6" stroke="#485f80" stroke-width="0.9"/><path d="M-5 -5.5 H5 M-5.5 1 V4.8 H5.5 V1" stroke="#34465f" stroke-width="1" fill="none"/></g><path d="M1029.2 63.400000000000006 V66.60000000000001 H1026Z" fill="#16181c"/><g transform="translate(974,78.6) scale(1.0)"><path d="M-5 -5 H5 L1 0 V5 L-1 3.5 V0Z" fill="#dadde1" stroke="#b5b9bf" stroke-width="1"/></g><g transform="translate(990,78.6) scale(1.0)"><path d="M-4 -5 H4 L1 -1.5 V1 H-1 V-1.5Z" fill="#9db6d6" stroke="#485f80" stroke-width="0.9"/><rect x="-5" y="1.5" width="10" height="3.5" fill="#485f80"/><path d="M-5 3.2 H5" stroke="#e8eef6" stroke-width="0.6"/></g><path d="M997.2 81.8 V85.0 H994Z" fill="#16181c"/><g transform="translate(1006,78.6) scale(1.0)"><path d="M-4 -5 H4 L1 -1.5 V1 H-1 V-1.5Z" fill="#9db6d6" stroke="#485f80" stroke-width="0.9"/><rect x="-4.5" y="-2" width="8" height="6.5" fill="none" stroke="#34465f" stroke-width="0.8" stroke-dasharray="1.3 1"/><rect x="0" y="1" width="4" height="3.5" fill="#fff" stroke="#34465f" stroke-width="0.7"/></g><path d="M1013.2 81.8 V85.0 H1010Z" fill="#16181c"/><g transform="translate(1022,78.6) scale(1.0)"><rect x="-1" y="-2.5" width="6" height="6.5" fill="#a5b9d3" stroke="#485f80" stroke-width="0.8"/><circle cx="-1.5" cy="-1" r="2.8" fill="#eef3f9" stroke="#485f80" stroke-width="1"/><path d="M-3.5 1 L-5.5 3.5" stroke="#485f80" stroke-width="1.4"/></g><g transform="translate(1046,60.2) scale(1.0)"><path d="M-4.5 -5 H-0.5 L4 1 V4.5 H-4.5Z" fill="#edf1f6" stroke="#34465f" stroke-width="1"/><path d="M-2 4.5 V1.5 H2" stroke="#485f80" stroke-width="0.9" fill="none"/></g><path d="M1053.2 63.400000000000006 V66.60000000000001 H1050Z" fill="#16181c"/><g transform="translate(1062,60.2) scale(1.0)"><rect x="-8" y="-8" width="16" height="16" rx="1.5" fill="#dbe7f5" stroke="#8fa9c9" stroke-width="1"/><rect x="-5" y="-4.5" width="10" height="9" fill="#2c3e5c"/><rect x="-3.8" y="-3" width="7.6" height="6" fill="#cfe0c8"/><path d="M-3 1 L-1 -2 L1 1 M1 -1 L3 -2" stroke="#2f7a3a" stroke-width="1" fill="none"/></g><path d="M1069.2 63.400000000000006 V66.60000000000001 H1066Z" fill="#16181c"/><g transform="translate(1078,60.2) scale(1.0)"><path d="M-2 -5 H5 V4.5 H-4.5 V-2Z" fill="#a5b9d3" stroke="#485f80" stroke-width="0.9"/><path d="M-5 -1 C-3 -4 1 -3 1 0 C1 2 -2 2 -2.5 0.5" stroke="#485f80" stroke-width="1" fill="none"/></g><g transform="translate(1094,60.2) scale(1.0)"><rect x="-5" y="-4.5" width="10" height="9" fill="#dfe3e8" stroke="#8a9098" stroke-width="0.9"/><path d="M-5 -1.5 H5 M-5 1.5 H5" stroke="#8a9098" stroke-width="0.7"/><rect x="-3.5" y="-3.8" width="3" height="1.6" fill="#5a626c"/><rect x="1" y="-3.8" width="2.5" height="1.6" fill="#5a626c"/></g><g transform="translate(1046,78.6) scale(1.0)"><path d="M0 0 V-5 M-1.5 -3.5 L0 -5.5 L1.5 -3.5" stroke="#485f80" stroke-width="1.1" fill="none"/><path d="M0 0 L-5 4" stroke="#2f9a48" stroke-width="1.5"/><path d="M-5.5 2 V4.6 H-3" stroke="#2f9a48" stroke-width="1.2" fill="none"/><path d="M0 0 L5 4" stroke="#d23a3a" stroke-width="1.5"/><path d="M5.5 2 V4.6 H3" stroke="#d23a3a" stroke-width="1.2" fill="none"/></g><g transform="translate(1062,78.6) scale(1.0)"><path d="M-5.5 -5 H5.5" stroke="#8a9098" stroke-width="1"/><path d="M-4 -3 H4 L0 1Z" fill="#e5eaf1" stroke="#8a9098" stroke-width="0.8"/><path d="M-1 -1 L3.5 3 L1.5 3 L2.5 5.5 L1.2 5.8 L0.3 3.5 L-1 5Z" fill="#f4f6fa" stroke="#485f80" stroke-width="0.7"/></g><path d="M1069.2 81.8 V85.0 H1066Z" fill="#16181c"/><g transform="translate(1078,78.6) scale(1.0)"><text x="0" y="5" font-size="14" text-anchor="middle" fill="#b4bac2" font-family="Liberation Sans, sans-serif">Σ</text></g><g transform="translate(1094,78.6) scale(1.0)"><rect x="-5" y="-4.5" width="10" height="9" fill="#e6e9ed" stroke="#8a9098" stroke-width="0.9"/><path d="M-5 -1.5 H5 M-5 1.5 H5 M0 -4.5 V4.5" stroke="#6a727c" stroke-width="0.8"/><rect x="-3.8" y="-3.6" width="2.6" height="1.4" fill="#4a525c"/><rect x="1.2" y="-3.6" width="2.6" height="1.4" fill="#4a525c"/></g></svg>
<svg class="a" style="left:0;top:0;filter:blur(0.35px)" width="1279" height="50" viewBox="0 0 1279 50"><rect x="3" y="3" width="9.5" height="9.5" fill="#0c0c0c"/><path d="M5.4 10.5 L7.7 4.6 L10 10.5" stroke="#fff" stroke-width="1.3" fill="none"/><path d="M15.9 7.7 H19.1 L17.5 9.5Z" fill="#4a5f80" opacity="0.8"/><path d="M32.5 7 L36 4.5 H42.5 V9.5 L39 12 H32.5Z" fill="#c9dbef" stroke="#2f4565" stroke-width="0.9"/><path d="M32.5 7 H39 V12 M39 7 L42.5 4.5 M35 8.5 H37.5 V10.5 H35Z" stroke="#2f4565" stroke-width="0.7" fill="none"/><rect x="47.5" y="3.5" width="9.5" height="9" rx="1" fill="#f6f6f2" stroke="#2f4565" stroke-width="0.9"/><path d="M49.5 6.5 H55 " stroke="#c03030" stroke-width="1.2"/><path d="M49.5 9 H55" stroke="#c8a020" stroke-width="1.2"/><path d="M49.5 11 H55" stroke="#555" stroke-width="0.8"/><rect x="62.5" y="3.5" width="9" height="9" rx="0.8" fill="#e8eef6" stroke="#2f4565" stroke-width="1"/><rect x="64.3" y="3.8" width="5.4" height="3" fill="#8fa8c8"/><rect x="64.8" y="8.6" width="4.4" height="3.6" fill="#f8f8f8" stroke="#2f4565" stroke-width="0.5"/><rect x="76.5" y="3.5" width="8" height="9" fill="#f8f8f6" stroke="#2f4565" stroke-width="0.9"/><path d="M81 10.5 L85.5 4.5 L87 5.8 L82.5 11.5Z" fill="#7a8aa0" stroke="#2f4565" stroke-width="0.6"/><path d="M89.4 7.7 H92.6 L91 9.5Z" fill="#4a5f80" opacity="0.8"/><rect x="96.5" y="3" width="10" height="7" fill="#f8f9fb" stroke="#2f4565" stroke-width="0.9"/><circle cx="100.5" cy="8" r="2.6" fill="#dfe8f4" stroke="#2f4565" stroke-width="0.9"/><path d="M98.8 10 L96.8 12.5" stroke="#2f4565" stroke-width="1.2"/><path d="M111.5 6.5 L115 3.5 V5.3 C119 5 121 7.5 120.5 11 C119.5 8.8 118 8 115 8 V9.8Z" fill="#dbe6f3" stroke="#a9bdd8" stroke-width="0.7"/><path d="M124.4 7.7 H127.6 L126 9.5Z" fill="#4a5f80" opacity="0.8"/><path d="M142.5 6.5 L139 3.5 V5.3 C135 5 133 7.5 133.5 11 C134.5 8.8 136 8 139 8 V9.8Z" fill="#dbe6f3" stroke="#a9bdd8" stroke-width="0.7"/><path d="M145.4 7.7 H148.6 L147 9.5Z" fill="#4a5f80" opacity="0.8"/><path d="M157 4.5 H154.5 V11.5 H157 M160.5 4.5 H163.5 V11.5 H160.5" stroke="#2f4565" stroke-width="1.5" fill="none"/><path d="M157 3 L159.3 4.5 L157 6Z M160.8 10 L158.5 11.5 L160.8 13Z" fill="#2f4565"/><path d="M167.4 7.7 H170.6 L169 9.5Z" fill="#4a5f80" opacity="0.8"/><circle cx="180" cy="8" r="4.6" fill="#f4f7fb" stroke="#e8eef6" stroke-width="1.6" stroke-dasharray="2 1.2"/><path d="M176.5 8 C178 5.8 182 5.8 183.5 8 C182 10 178 10 176.5 8Z" fill="#fff" stroke="#2f4565" stroke-width="0.7"/><circle cx="180" cy="8" r="1.1" fill="#2f4565"/><path d="M188.4 7.7 H191.6 L190 9.5Z" fill="#4a5f80" opacity="0.8"/><rect x="196.5" y="3" width="9.5" height="9.5" fill="#f6f8fb" stroke="#7a8ea8" stroke-width="0.8"/><path d="M201 3 V12.5 M196.5 8 H201" stroke="#7a8ea8" stroke-width="0.7"/><path d="M203 7.5 C204.5 8 204.5 10 203 10.5" stroke="#2f4565" stroke-width="0.8" fill="none"/><path d="M209.4 7.7 H212.6 L211 9.5Z" fill="#4a5f80" opacity="0.8"/><path d="M218 3.5 L226.5 12 M226.5 3.5 L218 12" stroke="#3c4a5c" stroke-width="2"/><path d="M217.5 3 L220 5.5 M227 3 L224.5 5.5" stroke="#6a7a90" stroke-width="2.4"/><path d="M231.4 7.7 H234.6 L233 9.5Z" fill="#4a5f80" opacity="0.8"/><path d="M247.2 6.3 H251.2" stroke="#2f4565" stroke-width="0.9"/><path d="M247.2 8 H251.2 L249.2 10Z" fill="#2f4565"/><circle cx="1169" cy="4.3" r="2" fill="#8a7870"/><path d="M1164.8 11.5 C1165 7 1167 6.5 1169 6.5 C1171 6.5 1173 7 1173.2 11.5Z" fill="#9a8a84"/><path d="M1202 2 L1203.8 2.5 L1205 8.5 H1211.2 L1212 4 H1204.3" stroke="#3a5f9a" stroke-width="1.1" fill="#4f78b8"/><circle cx="1206" cy="10.3" r="1" fill="#2f4a78"/><circle cx="1210.3" cy="10.3" r="1" fill="#2f4a78"/><circle cx="1221.5" cy="6.3" r="4.3" fill="#f4f7fb" stroke="#5a7299" stroke-width="0.8"/><text x="1221.5" y="9" font-size="7.5" font-weight="bold" text-anchor="middle" fill="#3a5580" font-family="Liberation Sans, sans-serif">?</text><path d="M1230.3 5 H1233.7 L1232 7Z" fill="#6d86aa"/><path d="M1240.5 9.2 H1246" stroke="#e9f0f8" stroke-width="1.4"/><rect x="1254.8" y="4.5" width="5.5" height="4.8" fill="none" stroke="#dfe8f4" stroke-width="1"/><path d="M1254.8 5 H1260.3" stroke="#dfe8f4" stroke-width="1.6"/><path d="M1269.5 4 L1275 9.5 M1275 4 L1269.5 9.5" stroke="#dbe5f2" stroke-width="1.2"/><circle cx="1250" cy="41" r="3.4" fill="#7a9cc8" stroke="#3f5f94" stroke-width="1.8" stroke-dasharray="1.7 1.1"/><circle cx="1250" cy="41" r="1.3" fill="#eef3f9"/><circle cx="1268" cy="38.8" r="2.6" fill="#f4f6f9" stroke="#8a9098" stroke-width="1"/><path d="M1266 41 L1263 45" stroke="#4a5a78" stroke-width="1.8"/></svg>
<div class="a" id="view" style=""></div>
<svg class="a" style="left:250px;top:98px" width="1029" height="568" viewBox="250 98 1029 568"><defs>
<filter id="b5" x="-2%" y="-2%" width="104%" height="104%"><feGaussianBlur stdDeviation="0.8"/></filter>
<filter id="b3" x="-2%" y="-2%" width="104%" height="104%"><feGaussianBlur stdDeviation="0.55"/></filter>
<filter id="b6" x="-2%" y="-2%" width="104%" height="104%"><feGaussianBlur stdDeviation="0.75"/></filter>
<filter id="noise" x="0" y="0" width="100%" height="100%" color-interpolation-filters="sRGB"><feTurbulence type="fractalNoise" baseFrequency="0.7" numOctaves="2" seed="7" result="n"/><feColorMatrix in="n" type="matrix" values="0 0 0 0 0.42  0 0 0 0 0.20  0 0 0 0 0.48  3.2 1.4 0 0 -2.0"/><feComposite in2="SourceGraphic" operator="in"/></filter>
<filter id="noise3" x="0" y="0" width="100%" height="100%" color-interpolation-filters="sRGB"><feTurbulence type="fractalNoise" baseFrequency="0.035 0.06" numOctaves="2" seed="11" result="n"/><feColorMatrix in="n" type="matrix" values="0 0 0 0 0.42  0 0 0 0 0.25  0 0 0 0 0.48  3 0 0 0 -1.35"/><feComposite in2="SourceGraphic" operator="in"/></filter>
<filter id="noise2" x="0" y="0" width="100%" height="100%" color-interpolation-filters="sRGB"><feTurbulence type="fractalNoise" baseFrequency="0.04 0.07" numOctaves="3" seed="3" result="n"/><feColorMatrix in="n" type="matrix" values="0 0 0 0 0.30  0 0 0 0 0.35  0 0 0 0 0.37  3.2 0 0 0 -1.45"/><feComposite in2="SourceGraphic" operator="in"/></filter>
<linearGradient id="gp" x1="0" x2="1" y1="0" y2="0"><stop offset="0" stop-color="#59636a"/><stop offset="0.32" stop-color="#49535a"/><stop offset="0.5" stop-color="#a3adb2"/><stop offset="0.66" stop-color="#4f5960"/><stop offset="1" stop-color="#3d474e"/></linearGradient>
<linearGradient id="gslab" gradientUnits="userSpaceOnUse" x1="552" y1="229" x2="511" y2="254"><stop offset="0" stop-color="#ae7eb0"/><stop offset="0.5" stop-color="#b86cba"/><stop offset="1" stop-color="#c066c2"/></linearGradient>
<linearGradient id="gslf" gradientUnits="userSpaceOnUse" x1="511" y1="254" x2="918" y2="488"><stop offset="0" stop-color="#8c8092"/><stop offset="0.1" stop-color="#946a9c"/><stop offset="1" stop-color="#94609e"/></linearGradient>
<linearGradient id="gup" gradientUnits="userSpaceOnUse" x1="523" y1="233" x2="947" y2="457"><stop offset="0" stop-color="#8f8995"/><stop offset="0.05" stop-color="#a48ea8"/><stop offset="0.15" stop-color="#b48cb2"/><stop offset="1" stop-color="#b68cb4"/></linearGradient>
<linearGradient id="gupf" gradientUnits="userSpaceOnUse" x1="523" y1="233" x2="930" y2="466"><stop offset="0" stop-color="#867e8e"/><stop offset="0.04" stop-color="#ae74b0"/><stop offset="1" stop-color="#b86cb8"/></linearGradient>
<linearGradient id="gcol" x1="0" x2="1" y1="0" y2="0"><stop offset="0" stop-color="#000" stop-opacity="0.12"/><stop offset="0.3" stop-color="#fff" stop-opacity="0.10"/><stop offset="0.65" stop-color="#000" stop-opacity="0.04"/><stop offset="1" stop-color="#000" stop-opacity="0.30"/></linearGradient>
<linearGradient id="gcb" x1="0" x2="0" y1="0" y2="1"><stop offset="0" stop-color="#8a8790" stop-opacity="0"/><stop offset="1" stop-color="#908a96" stop-opacity="0.8"/></linearGradient>
<linearGradient id="gbt" gradientUnits="userSpaceOnUse" x1="526" y1="168" x2="944" y2="397"><stop offset="0" stop-color="#788488"/><stop offset="0.06" stop-color="#8e999d"/><stop offset="0.5" stop-color="#939ea3"/><stop offset="0.85" stop-color="#9aa5aa"/><stop offset="1" stop-color="#abb5b8"/></linearGradient>
<linearGradient id="gbf" gradientUnits="userSpaceOnUse" x1="526" y1="178" x2="932" y2="413"><stop offset="0" stop-color="#5f6b70"/><stop offset="0.1" stop-color="#727e84"/><stop offset="0.4" stop-color="#6b777d"/><stop offset="0.7" stop-color="#657177"/><stop offset="0.9" stop-color="#76828a"/><stop offset="1" stop-color="#8c979b"/></linearGradient>
</defs><g filter="url(#b6)"><path d="M548.2 257.4 V353.0 l3.4 2.2 l0.8 -1.6 l3.4 1.2 V261.7z" fill="url(#gp)"/><path d="M571.0 270.4 V366.2 l3.4 2.2 l0.8 -1.6 l3.4 1.2 V274.7z" fill="url(#gp)"/><path d="M593.7 283.3 V379.5 l3.4 2.2 l0.8 -1.6 l3.4 1.2 V287.6z" fill="url(#gp)"/><path d="M616.5 296.3 V392.7 l3.4 2.2 l0.8 -1.6 l3.4 1.2 V300.6z" fill="url(#gp)"/><path d="M639.2 309.2 V406.0 l3.4 2.2 l0.8 -1.6 l3.4 1.2 V313.5z" fill="url(#gp)"/><path d="M662.0 322.2 V419.2 l3.4 2.2 l0.8 -1.6 l3.4 1.2 V326.5z" fill="url(#gp)"/><path d="M684.8 335.1 V432.4 l3.4 2.2 l0.8 -1.6 l3.4 1.2 V339.4z" fill="url(#gp)"/><path d="M707.5 348.1 V445.7 l3.4 2.2 l0.8 -1.6 l3.4 1.2 V352.4z" fill="url(#gp)"/><path d="M730.3 361.0 V458.9 l3.4 2.2 l0.8 -1.6 l3.4 1.2 V365.3z" fill="url(#gp)"/><path d="M753.0 374.0 V472.2 l3.4 2.2 l0.8 -1.6 l3.4 1.2 V378.3z" fill="url(#gp)"/><path d="M775.8 386.9 V485.4 l3.4 2.2 l0.8 -1.6 l3.4 1.2 V391.2z" fill="url(#gp)"/><path d="M798.6 399.9 V498.6 l3.4 2.2 l0.8 -1.6 l3.4 1.2 V404.2z" fill="url(#gp)"/><path d="M821.3 412.8 V511.9 l3.4 2.2 l0.8 -1.6 l3.4 1.2 V417.1z" fill="url(#gp)"/><path d="M844.1 425.8 V525.1 l3.4 2.2 l0.8 -1.6 l3.4 1.2 V430.1z" fill="url(#gp)"/><path d="M866.8 438.7 V538.4 l3.4 2.2 l0.8 -1.6 l3.4 1.2 V443.0z" fill="url(#gp)"/><path d="M889.6 451.7 V551.6 l3.4 2.2 l0.8 -1.6 l3.4 1.2 V456.0z" fill="url(#gp)"/><path d="M912.4 464.6 V564.8 l3.4 2.2 l0.8 -1.6 l3.4 1.2 V468.9z" fill="url(#gp)"/><path d="M935.1 477.6 V578.1 l3.4 2.2 l0.8 -1.6 l3.4 1.2 V481.9z" fill="url(#gp)"/><path d="M526.6 266.2 V366.0 l3.6 2.2 l0.8 -1.6 l3.6 1.2 V270.8z" fill="url(#gp)"/><path d="M549.4 279.2 V379.2 l3.6 2.2 l0.8 -1.6 l3.6 1.2 V283.8z" fill="url(#gp)"/><path d="M572.1 292.1 V392.5 l3.6 2.2 l0.8 -1.6 l3.6 1.2 V296.7z" fill="url(#gp)"/><path d="M594.9 305.1 V405.7 l3.6 2.2 l0.8 -1.6 l3.6 1.2 V309.7z" fill="url(#gp)"/><path d="M617.6 318.0 V419.0 l3.6 2.2 l0.8 -1.6 l3.6 1.2 V322.6z" fill="url(#gp)"/><path d="M640.4 331.0 V432.2 l3.6 2.2 l0.8 -1.6 l3.6 1.2 V335.6z" fill="url(#gp)"/><path d="M663.2 343.9 V445.4 l3.6 2.2 l0.8 -1.6 l3.6 1.2 V348.5z" fill="url(#gp)"/><path d="M685.9 356.9 V458.7 l3.6 2.2 l0.8 -1.6 l3.6 1.2 V361.5z" fill="url(#gp)"/><path d="M708.7 369.9 V471.9 l3.6 2.2 l0.8 -1.6 l3.6 1.2 V374.4z" fill="url(#gp)"/><path d="M731.4 382.8 V485.2 l3.6 2.2 l0.8 -1.6 l3.6 1.2 V387.4z" fill="url(#gp)"/><path d="M754.2 395.8 V498.4 l3.6 2.2 l0.8 -1.6 l3.6 1.2 V400.3z" fill="url(#gp)"/><path d="M777.0 408.7 V511.6 l3.6 2.2 l0.8 -1.6 l3.6 1.2 V413.3z" fill="url(#gp)"/><path d="M799.7 421.7 V524.9 l3.6 2.2 l0.8 -1.6 l3.6 1.2 V426.2z" fill="url(#gp)"/><path d="M822.5 434.6 V538.1 l3.6 2.2 l0.8 -1.6 l3.6 1.2 V439.2z" fill="url(#gp)"/><path d="M845.2 447.6 V551.4 l3.6 2.2 l0.8 -1.6 l3.6 1.2 V452.1z" fill="url(#gp)"/><path d="M868.0 460.5 V564.6 l3.6 2.2 l0.8 -1.6 l3.6 1.2 V465.1z" fill="url(#gp)"/><path d="M890.8 473.5 V577.8 l3.6 2.2 l0.8 -1.6 l3.6 1.2 V478.0z" fill="url(#gp)"/><path d="M913.5 486.4 V591.1 l3.6 2.2 l0.8 -1.6 l3.6 1.2 V491.0z" fill="url(#gp)"/></g><g filter="url(#b5)"><polygon points="510.7,254.0 552.4,229.3 960.6,463.5 918.3,488.3" fill="url(#gslab)" opacity="0.95"/><polygon points="510.7,254.0 918.3,488.3 918.3,494.6 510.7,260.3" fill="url(#gslf)" opacity="0.95"/><polygon points="918.3,488.3 960.6,463.5 960.6,470.8 918.3,494.6" fill="#737a9c" opacity="0.95"/><polygon points="523.3,233.5 540.8,223.7 947.5,456.8 930.0,466.6" fill="url(#gup)" opacity="0.92"/><polygon points="523.3,233.5 930.0,466.6 930.0,480.1 523.3,247.0" fill="url(#gupf)" opacity="0.94"/><polygon points="930.0,466.6 947.5,456.8 947.5,468.3 930.0,480.1" fill="#7f5590" opacity="0.9"/><polygon points="947.5,456.8 960.6,463.5 943.6,473.5 944.5,467.8" fill="#8a8fae" opacity="0.75"/><polygon points="510.7,254.0 523.3,247.0 523.3,233.5 540.8,223.7 947.5,456.8 960.6,463.5 960.6,469.8 918.3,494.6 510.7,260.3" fill="#fff" filter="url(#noise3)" opacity="0.5"/></g><g filter="url(#b3)"><polygon points="511.7,254.0 524.3,247.0 524.3,234.5 540.8,225.2 946.5,457.8 959.1,464.0 959.1,468.8 918.3,493.1 511.7,258.8" fill="#fff" filter="url(#noise)" opacity="0.36"/></g><g filter="url(#b5)"><path d="M555.4 182.1 L555.4 247.8 A10.0 4.6 0 0 0 575.4 247.8 L575.4 193.1 Z" fill="#7f5852" opacity="0.95"/><path d="M555.4 182.1 L555.4 247.8 A10.0 4.6 0 0 0 575.4 247.8 L575.4 193.1 Z" fill="url(#gcol)"/><rect x="560.9" y="190.1" width="8" height="59.7" fill="#8c8f8e" opacity="0.33"/><path d="M555.4 233.8 L555.4 247.8 A10.0 4.6 0 0 0 575.4 247.8 L575.4 233.8 Z" fill="url(#gcb)"/><line x1="557.9" y1="183.5" x2="557.9" y2="250.8" stroke="#c8453c" stroke-width="1.0" opacity="0.62"/><line x1="561.4" y1="185.4" x2="561.4" y2="262.8" stroke="#c8453c" stroke-width="1.0" opacity="0.62"/><line x1="564.9" y1="187.4" x2="564.9" y2="250.8" stroke="#c8453c" stroke-width="1.0" opacity="0.62"/><line x1="568.4" y1="189.3" x2="568.4" y2="262.8" stroke="#c8453c" stroke-width="1.0" opacity="0.62"/><line x1="571.9" y1="191.2" x2="571.9" y2="250.8" stroke="#c8453c" stroke-width="1.0" opacity="0.62"/><path d="M623.4 221.4 L623.4 286.8 A10.0 4.6 0 0 0 643.4 286.8 L643.4 232.4 Z" fill="#787f50" opacity="0.95"/><path d="M623.4 221.4 L623.4 286.8 A10.0 4.6 0 0 0 643.4 286.8 L643.4 232.4 Z" fill="url(#gcol)"/><rect x="628.9" y="229.4" width="8" height="59.4" fill="#8c8f8e" opacity="0.33"/><path d="M623.4 272.8 L623.4 286.8 A10.0 4.6 0 0 0 643.4 286.8 L643.4 272.8 Z" fill="url(#gcb)"/><line x1="625.9" y1="222.7" x2="625.9" y2="289.8" stroke="#b9bd58" stroke-width="1.0" opacity="0.62"/><line x1="629.4" y1="224.7" x2="629.4" y2="301.8" stroke="#b9bd58" stroke-width="1.0" opacity="0.62"/><line x1="632.9" y1="226.6" x2="632.9" y2="289.8" stroke="#b9bd58" stroke-width="1.0" opacity="0.62"/><line x1="636.4" y1="228.5" x2="636.4" y2="301.8" stroke="#b9bd58" stroke-width="1.0" opacity="0.62"/><line x1="639.9" y1="230.4" x2="639.9" y2="289.8" stroke="#b9bd58" stroke-width="1.0" opacity="0.62"/><path d="M691.4 260.6 L691.4 325.8 A10.0 4.6 0 0 0 711.4 325.8 L711.4 271.6 Z" fill="#4c6f6e" opacity="0.95"/><path d="M691.4 260.6 L691.4 325.8 A10.0 4.6 0 0 0 711.4 325.8 L711.4 271.6 Z" fill="url(#gcol)"/><rect x="696.9" y="268.6" width="8" height="59.2" fill="#8c8f8e" opacity="0.33"/><path d="M691.4 311.8 L691.4 325.8 A10.0 4.6 0 0 0 711.4 325.8 L711.4 311.8 Z" fill="url(#gcb)"/><line x1="693.9" y1="262.0" x2="693.9" y2="328.8" stroke="#52c0b0" stroke-width="1.0" opacity="0.62"/><line x1="697.4" y1="263.9" x2="697.4" y2="340.8" stroke="#52c0b0" stroke-width="1.0" opacity="0.62"/><line x1="700.9" y1="265.8" x2="700.9" y2="328.8" stroke="#52c0b0" stroke-width="1.0" opacity="0.62"/><line x1="704.4" y1="267.8" x2="704.4" y2="340.8" stroke="#52c0b0" stroke-width="1.0" opacity="0.62"/><line x1="707.9" y1="269.7" x2="707.9" y2="328.8" stroke="#52c0b0" stroke-width="1.0" opacity="0.62"/><path d="M759.4 299.8 L759.4 364.8 A10.0 4.6 0 0 0 779.4 364.8 L779.4 310.8 Z" fill="#4e6674" opacity="0.95"/><path d="M759.4 299.8 L759.4 364.8 A10.0 4.6 0 0 0 779.4 364.8 L779.4 310.8 Z" fill="url(#gcol)"/><rect x="764.9" y="307.8" width="8" height="59.0" fill="#8c8f8e" opacity="0.33"/><path d="M759.4 350.8 L759.4 364.8 A10.0 4.6 0 0 0 779.4 364.8 L779.4 350.8 Z" fill="url(#gcb)"/><line x1="761.9" y1="301.2" x2="761.9" y2="367.8" stroke="#5cb4c8" stroke-width="1.0" opacity="0.62"/><line x1="765.4" y1="303.1" x2="765.4" y2="379.8" stroke="#5cb4c8" stroke-width="1.0" opacity="0.62"/><line x1="768.9" y1="305.1" x2="768.9" y2="367.8" stroke="#5cb4c8" stroke-width="1.0" opacity="0.62"/><line x1="772.4" y1="307.0" x2="772.4" y2="379.8" stroke="#5cb4c8" stroke-width="1.0" opacity="0.62"/><line x1="775.9" y1="308.9" x2="775.9" y2="367.8" stroke="#5cb4c8" stroke-width="1.0" opacity="0.62"/><path d="M827.4 339.1 L827.4 403.8 A10.0 4.6 0 0 0 847.4 403.8 L847.4 350.1 Z" fill="#5f6360" opacity="0.95"/><path d="M827.4 339.1 L827.4 403.8 A10.0 4.6 0 0 0 847.4 403.8 L847.4 350.1 Z" fill="url(#gcol)"/><rect x="832.9" y="347.1" width="8" height="58.7" fill="#8c8f8e" opacity="0.33"/><path d="M827.4 389.8 L827.4 403.8 A10.0 4.6 0 0 0 847.4 403.8 L847.4 389.8 Z" fill="url(#gcb)"/><line x1="829.9" y1="340.4" x2="829.9" y2="406.8" stroke="#8c8f84" stroke-width="1.0" opacity="0.62"/><line x1="833.4" y1="342.4" x2="833.4" y2="418.8" stroke="#8c8f84" stroke-width="1.0" opacity="0.62"/><line x1="836.9" y1="344.3" x2="836.9" y2="406.8" stroke="#8c8f84" stroke-width="1.0" opacity="0.62"/><line x1="840.4" y1="346.2" x2="840.4" y2="418.8" stroke="#8c8f84" stroke-width="1.0" opacity="0.62"/><line x1="843.9" y1="348.1" x2="843.9" y2="406.8" stroke="#8c8f84" stroke-width="1.0" opacity="0.62"/><path d="M895.4 378.3 L895.4 442.8 A10.0 4.6 0 0 0 915.4 442.8 L915.4 389.3 Z" fill="#835852" opacity="0.95"/><path d="M895.4 378.3 L895.4 442.8 A10.0 4.6 0 0 0 915.4 442.8 L915.4 389.3 Z" fill="url(#gcol)"/><rect x="900.9" y="386.3" width="8" height="58.5" fill="#8c8f8e" opacity="0.33"/><path d="M895.4 428.8 L895.4 442.8 A10.0 4.6 0 0 0 915.4 442.8 L915.4 428.8 Z" fill="url(#gcb)"/><line x1="897.9" y1="379.7" x2="897.9" y2="445.8" stroke="#d0423c" stroke-width="1.0" opacity="0.62"/><line x1="901.4" y1="381.6" x2="901.4" y2="457.8" stroke="#d0423c" stroke-width="1.0" opacity="0.62"/><line x1="904.9" y1="383.5" x2="904.9" y2="445.8" stroke="#d0423c" stroke-width="1.0" opacity="0.62"/><line x1="908.4" y1="385.5" x2="908.4" y2="457.8" stroke="#d0423c" stroke-width="1.0" opacity="0.62"/><line x1="911.9" y1="387.4" x2="911.9" y2="445.8" stroke="#d0423c" stroke-width="1.0" opacity="0.62"/></g><g filter="url(#b5)"><polygon points="525.8,167.8 537.9,160.3 944.4,395.2 932.3,402.4" fill="url(#gbt)" opacity="0.93"/><polygon points="525.8,167.8 932.3,402.4 932.3,424.0 525.8,188.6" fill="url(#gbf)" opacity="0.9"/><polygon points="932.3,402.4 944.4,395.2 944.4,417.0 932.3,424.0" fill="#76828a" opacity="0.97"/><polygon points="525.8,167.8 537.9,160.3 537.9,180.8 525.8,188.6" fill="#4f5a5c" opacity="0.38"/><polygon points="525.8,167.8 537.9,160.3 944.4,395.2 944.4,417.0 932.3,424.0 525.8,188.6" fill="#fff" filter="url(#noise2)" opacity="0.38"/><path d="M588.7 190.9 L576.6 197.1 V218.6" fill="none" stroke="#c4cccd" stroke-width="0.6" opacity="0.3"/><path d="M639.5 220.2 L627.4 226.4 V247.9" fill="none" stroke="#c4cccd" stroke-width="0.6" opacity="0.3"/><path d="M690.3 249.6 L678.2 255.8 V277.3" fill="none" stroke="#c4cccd" stroke-width="0.6" opacity="0.3"/><path d="M741.1 278.9 L729.0 285.1 V306.6" fill="none" stroke="#c4cccd" stroke-width="0.6" opacity="0.3"/><path d="M792.0 308.2 L779.9 314.4 V335.9" fill="none" stroke="#c4cccd" stroke-width="0.6" opacity="0.3"/><path d="M842.8 337.6 L830.7 343.8 V365.2" fill="none" stroke="#c4cccd" stroke-width="0.6" opacity="0.3"/><path d="M893.6 366.9 L881.5 373.1 V394.6" fill="none" stroke="#c4cccd" stroke-width="0.6" opacity="0.3"/><path d="M525.8 167.8 L932.3 402.4" stroke="#aab4b6" stroke-width="0.8" opacity="0.5"/></g><g filter="url(#b5)"><polygon points="555.4,187.4 575.4,198.9 575.4,217.0 555.4,205.0" fill="#7f5852" opacity="0.66"/><polygon points="555.4,177.7 575.4,187.7 575.4,198.9 555.4,187.4" fill="#7f5852" opacity="0.2"/><line x1="558.4" y1="178.3" x2="558.4" y2="211.0" stroke="#c8453c" stroke-width="1.0" opacity="0.62"/><line x1="562.4" y1="180.5" x2="562.4" y2="211.0" stroke="#c8453c" stroke-width="1.0" opacity="0.62"/><line x1="566.4" y1="182.7" x2="566.4" y2="211.0" stroke="#c8453c" stroke-width="1.0" opacity="0.62"/><line x1="570.4" y1="184.9" x2="570.4" y2="211.0" stroke="#c8453c" stroke-width="1.0" opacity="0.62"/><line x1="573.4" y1="186.6" x2="573.4" y2="211.0" stroke="#c8453c" stroke-width="1.0" opacity="0.62"/><polygon points="623.4,226.6 643.4,238.2 643.4,256.3 623.4,244.3" fill="#787f50" opacity="0.58"/><polygon points="623.4,216.9 643.4,226.9 643.4,238.2 623.4,226.6" fill="#787f50" opacity="0.18"/><line x1="626.4" y1="217.6" x2="626.4" y2="250.3" stroke="#b9bd58" stroke-width="1.0" opacity="0.62"/><line x1="630.4" y1="219.8" x2="630.4" y2="250.3" stroke="#b9bd58" stroke-width="1.0" opacity="0.62"/><line x1="634.4" y1="222.0" x2="634.4" y2="250.3" stroke="#b9bd58" stroke-width="1.0" opacity="0.62"/><line x1="638.4" y1="224.2" x2="638.4" y2="250.3" stroke="#b9bd58" stroke-width="1.0" opacity="0.62"/><line x1="641.4" y1="225.8" x2="641.4" y2="250.3" stroke="#b9bd58" stroke-width="1.0" opacity="0.62"/><polygon points="691.4,265.9 711.4,277.4 711.4,295.5 691.4,283.5" fill="#4c6f6e" opacity="0.32"/><polygon points="691.4,256.1 711.4,266.1 711.4,277.4 691.4,265.9" fill="#4c6f6e" opacity="0.1"/><line x1="694.4" y1="256.8" x2="694.4" y2="289.5" stroke="#52c0b0" stroke-width="1.0" opacity="0.62"/><line x1="698.4" y1="259.0" x2="698.4" y2="289.5" stroke="#52c0b0" stroke-width="1.0" opacity="0.62"/><line x1="702.4" y1="261.2" x2="702.4" y2="289.5" stroke="#52c0b0" stroke-width="1.0" opacity="0.62"/><line x1="706.4" y1="263.4" x2="706.4" y2="289.5" stroke="#52c0b0" stroke-width="1.0" opacity="0.62"/><line x1="709.4" y1="265.0" x2="709.4" y2="289.5" stroke="#52c0b0" stroke-width="1.0" opacity="0.62"/><polygon points="759.4,305.1 779.4,316.6 779.4,334.8 759.4,322.8" fill="#4e6674" opacity="0.32"/><polygon points="759.4,295.4 779.4,305.4 779.4,316.6 759.4,305.1" fill="#4e6674" opacity="0.1"/><line x1="762.4" y1="296.0" x2="762.4" y2="328.8" stroke="#5cb4c8" stroke-width="1.0" opacity="0.62"/><line x1="766.4" y1="298.2" x2="766.4" y2="328.8" stroke="#5cb4c8" stroke-width="1.0" opacity="0.62"/><line x1="770.4" y1="300.4" x2="770.4" y2="328.8" stroke="#5cb4c8" stroke-width="1.0" opacity="0.62"/><line x1="774.4" y1="302.6" x2="774.4" y2="328.8" stroke="#5cb4c8" stroke-width="1.0" opacity="0.62"/><line x1="777.4" y1="304.3" x2="777.4" y2="328.8" stroke="#5cb4c8" stroke-width="1.0" opacity="0.62"/><polygon points="827.4,344.3 847.4,355.9 847.4,374.0 827.4,362.0" fill="#5f6360" opacity="0.34"/><polygon points="827.4,334.6 847.4,344.6 847.4,355.9 827.4,344.3" fill="#5f6360" opacity="0.1"/><line x1="830.4" y1="335.3" x2="830.4" y2="368.0" stroke="#8c8f84" stroke-width="1.0" opacity="0.62"/><line x1="834.4" y1="337.5" x2="834.4" y2="368.0" stroke="#8c8f84" stroke-width="1.0" opacity="0.62"/><line x1="838.4" y1="339.7" x2="838.4" y2="368.0" stroke="#8c8f84" stroke-width="1.0" opacity="0.62"/><line x1="842.4" y1="341.9" x2="842.4" y2="368.0" stroke="#8c8f84" stroke-width="1.0" opacity="0.62"/><line x1="845.4" y1="343.5" x2="845.4" y2="368.0" stroke="#8c8f84" stroke-width="1.0" opacity="0.62"/><polygon points="895.4,383.6 915.4,395.1 915.4,413.2 895.4,401.2" fill="#835852" opacity="0.58"/><polygon points="895.4,373.8 915.4,383.8 915.4,395.1 895.4,383.6" fill="#835852" opacity="0.18"/><line x1="898.4" y1="374.5" x2="898.4" y2="407.2" stroke="#d0423c" stroke-width="1.0" opacity="0.62"/><line x1="902.4" y1="376.7" x2="902.4" y2="407.2" stroke="#d0423c" stroke-width="1.0" opacity="0.62"/><line x1="906.4" y1="378.9" x2="906.4" y2="407.2" stroke="#d0423c" stroke-width="1.0" opacity="0.62"/><line x1="910.4" y1="381.1" x2="910.4" y2="407.2" stroke="#d0423c" stroke-width="1.0" opacity="0.62"/><line x1="913.4" y1="382.7" x2="913.4" y2="407.2" stroke="#d0423c" stroke-width="1.0" opacity="0.62"/></g></svg>
<div class="a" id="viewlbl" style=""></div>
<div class="a" id="panel" style=""></div>
<div class="a" id="phead" style=""></div>
<div class="a" id="pbody" style=""></div>
<div class="ptab" style="left:3px;width:45px;"></div>
<div class="ptab" style="left:51px;width:44.5px;"></div>
<div class="ptab" style="left:98.5px;width:45.0px;"></div>
<div class="ptab" style="left:146px;width:47px;top:113px;height:16px;background:#fdfeff;"></div>
<div class="ptab" style="left:194.5px;width:45.5px;background:linear-gradient(#d0ddee 0%,#a9c1df 50%,#85a6ce 100%);"></div>
<div class="a" id="drop" style=""></div>
<div class="a" id="gray" style=""></div>
<div class="vtab" style="top:152px;height:34px;background:linear-gradient(90deg,#f6f9fd,#dbe6f3);"></div>
<div class="vtab" style="top:189.5px;height:55.5px;background:linear-gradient(90deg,#f6f9fd,#dbe6f3);"></div>
<div class="vtab" style="top:248.5px;height:63.5px;background:linear-gradient(90deg,#f6f9fd,#dbe6f3);"></div>
<div class="vtab" style="top:314.5px;height:68.0px;left:228px;width:17px;background:#fdfeff;border-top:1.5px solid #6f8fb8;"></div>
<div class="vtab" style="top:386.5px;height:69.0px;background:linear-gradient(90deg,#f6f9fd,#dbe6f3);"></div>
<svg class="a" style="left:0;top:96px;filter:blur(0.3px)" width="1279" height="572" viewBox="0 96 1279 572"><path d="M227.3 100.2 H230.7 V104.2 H227.3Z" fill="#f4f6f9" stroke="#1a1a1a" stroke-width="0.8"/><path d="M229.8 100.2 V104.2" stroke="#1a1a1a" stroke-width="1.1"/><path d="M226.3 104.6 H231.7 M229 104.6 V107.6" stroke="#1a1a1a" stroke-width="0.9"/><path d="M239 101.2 L244.2 106.4 M244.2 101.2 L239 106.4" stroke="#1a1a1a" stroke-width="1.3"/><rect x="233.5" y="129.5" width="10.5" height="17" fill="#f4f7fb" stroke="#c3cfdd" stroke-width="0.7"/><path d="M236.8 136.6 H241.4 L239.1 139.2Z" fill="#1a1a1a"/><rect x="216.2" y="140" width="33.2" height="11.2" fill="#6a7585" opacity="0.28"/><rect x="215.2" y="138.7" width="33.2" height="11.2" fill="#fbfcfd" stroke="#9aa2ad" stroke-width="0.7"/><path d="M15 289.7 H38.5" stroke="#d2d242" stroke-width="1.3"/><path d="M15 304.2 H38.5" stroke="#d2d242" stroke-width="0.9"/><path d="M15 319.4 H38.5" stroke="#d2d242" stroke-width="1.3"/><path d="M15 333.8 H38.5" stroke="#d2d242" stroke-width="0.9"/><path d="M15 348.2 H38.5" stroke="#d2d242" stroke-width="0.9"/><path d="M15 362.6 H38.5" stroke="#d2d242" stroke-width="1.3"/><path d="M15 405.6 H38.5" stroke="#d96565" stroke-width="0.9" opacity="0.85"/><path d="M15 420.6 H38.5" stroke="#d96565" stroke-width="0.9" opacity="0.85"/><path d="M15 435.1 H38.5" stroke="#d96565" stroke-width="0.9" opacity="0.85"/><path d="M15 449.3 H38.5" stroke="#d96565" stroke-width="0.9" opacity="0.85"/><path d="M15 492.3 H38.5" stroke="#d96565" stroke-width="0.9" opacity="0.85"/><path d="M15 507 H38.5" stroke="#d96565" stroke-width="0.9" opacity="0.85"/><path d="M15 521.5 H38.5" stroke="#d96565" stroke-width="0.9" opacity="0.85"/><path d="M15 536 H38.5" stroke="#d96565" stroke-width="0.9" opacity="0.85"/><circle cx="14.8" cy="652" r="5.6" fill="#f2f2f2" stroke="#d8d8d8" stroke-width="0.6"/><circle cx="14.8" cy="652" r="3.8" fill="none" stroke="#c03030" stroke-width="1.1" stroke-dasharray="1.3 1"/><rect x="13" y="650.5" width="3.6" height="3" fill="#d24040"/><path d="M234.2 654.3 L239.8 660 M239.8 654.3 L234.2 660" stroke="#1a1a1a" stroke-width="1.2"/><circle cx="262.3" cy="656" r="5.6" fill="#f4f6fa" stroke="#d5dde8" stroke-width="0.6"/><circle cx="262.3" cy="656" r="3.6" fill="none" stroke="#8a96a8" stroke-width="1" stroke-dasharray="1.2 1"/><circle cx="262.3" cy="656" r="1.2" fill="#c04040"/><rect x="1256.8" y="105.3" width="4.6" height="3.8" fill="none" stroke="#2f4a78" stroke-width="1.3"/><path d="M1258.8 105 V103.6 H1263.6 V107.3 H1262" fill="none" stroke="#2f4a78" stroke-width="1.2"/><path d="M1267.6 103.8 L1273 109.2 M1273 103.8 L1267.6 109.2" stroke="#2f4a78" stroke-width="1.7"/></svg>
<div class="vt" style="left:238.2px;top:168.5px;transform:translate(-50%,-50%) rotate(-90deg);transform-origin:center center;font-weight:normal">Sub_Pier</div>
<div class="vt" style="left:238.2px;top:216.75px;transform:translate(-50%,-50%) rotate(-90deg);transform-origin:center center;font-weight:normal">Sub_Pier_Cap</div>
<div class="vt" style="left:238.2px;top:279.75px;transform:translate(-50%,-50%) rotate(-90deg);transform-origin:center center;font-weight:normal">Sub_Pier_Column</div>
<div class="vt" style="left:238.4px;top:348.0px;transform:translate(-50%,-50%) rotate(-90deg);transform-origin:center center;font-weight:normal">Sub_Pier_Footing</div>
<div class="vt" style="left:238.2px;top:420.5px;transform:translate(-50%,-50%) rotate(-90deg);transform-origin:center center;font-weight:normal">All Sub. Pier Layers</div>
<div class="a" id="status" style=""></div>
<div class="a" id="stbox" style=""></div>
<div class="a" id="help" style=""></div>
<div class="hsep" style="left:799.5px"></div>
<div class="hsep" style="left:1011.5px"></div>
<div class="hsep" style="left:1148px"></div>
<div class="hsep" style="left:1207px"></div>
<div class="a" id="task" style=""></div>
<svg class="a" style="left:0;top:676px;filter:blur(0.35px)" width="1279" height="44" viewBox="0 676 1279 44"><path d="M6.5 705.5 L11 704.9 V709.4 H6.5Z M12 704.8 L17.5 704 V709.4 H12Z M6.5 710.4 H11 V715 L6.5 714.4Z M12 710.4 H17.5 V715.9 L12 715.1Z" fill="#f4f6f8"/><circle cx="38" cy="708.2" r="3.6" fill="none" stroke="#f4f6f8" stroke-width="1.3"/><path d="M35.4 711 L31.2 715.4" stroke="#f4f6f8" stroke-width="1.4"/><circle cx="60.3" cy="710" r="4.6" fill="none" stroke="#f4f6f8" stroke-width="1.5"/><rect x="80" y="706.8" width="6.5" height="6.2" fill="none" stroke="#f4f6f8" stroke-width="1.1"/><path d="M79.5 704.8 H87 M79.5 715.2 H87 M89 705 V715" stroke="#f4f6f8" stroke-width="1"/><rect x="105.0" y="704.75" width="10" height="10.5" rx="1" fill="#1e74c8"/><text x="110" y="712.6" font-size="7.5" font-weight="bold" text-anchor="middle" fill="#fff" font-family="Liberation Sans, sans-serif">o</text><rect x="104.5" y="706.5" width="6" height="7" fill="#0f5aa8"/><text x="107.5" y="712.6" font-size="6.5" font-weight="bold" text-anchor="middle" fill="#fff" font-family="Liberation Sans, sans-serif">o</text><circle cx="134.5" cy="710" r="5.4" fill="#e8b820"/><path d="M134.5 710 L129.8 707.3 A5.4 5.4 0 0 1 139.2 707.3Z" fill="#d8402c"/><path d="M134.5 710 L129.8 707.3 A5.4 5.4 0 0 0 134.5 715.4Z" fill="#3a9a48"/><circle cx="134.5" cy="710" r="2.3" fill="#3f7fe0" stroke="#f4f4f4" stroke-width="0.8"/><path d="M153.5 706 H158 L159 707 H165 V714.5 H153.5Z" fill="#f0c040"/><rect x="153.5" y="708.5" width="11.5" height="6" fill="#f8d868"/><rect x="156.5" y="711.5" width="5.5" height="3" fill="#4a90d8"/><rect x="178" y="705.5" width="10" height="9.5" fill="#f0d848"/><path d="M178 705.5 H188 V707.5 H178Z" fill="#3a3a3a"/><path d="M184 710 L188.5 704.5" stroke="#2a2a2a" stroke-width="1.4"/><rect x="203.0" y="705.0" width="11" height="10" rx="1" fill="#2b5fb8"/><rect x="202.5" y="706.8" width="6.5" height="6.5" fill="#1a4a9a"/><text x="205.8" y="712.3" font-size="5.8" font-weight="bold" text-anchor="middle" fill="#fff" font-family="Liberation Sans, sans-serif">W</text><rect x="227.5" y="705.0" width="11" height="10" rx="1" fill="#1f7a48"/><rect x="227" y="706.8" width="6.5" height="6.5" fill="#0f5a30"/><text x="230.3" y="712.3" font-size="5.8" font-weight="bold" text-anchor="middle" fill="#fff" font-family="Liberation Sans, sans-serif">X</text><circle cx="257.5" cy="710" r="5.4" fill="#28a8e8"/><text x="257.5" y="713" font-size="8" font-weight="bold" text-anchor="middle" fill="#fff" font-family="Liberation Sans, sans-serif">S</text><path d="M277.5 711 C277.5 703 288 703 288 710.5 H281 C281.5 714 286 714 287.5 712.8 V715 C283 717 277.5 715.5 277.5 711Z" fill="#2a7ad8"/><rect x="301.5" y="707" width="10.5" height="8.5" fill="#f2f2f2"/><path d="M304.5 707 V705.5 C304.5 703.5 309 703.5 309 705.5 V707" stroke="#f2f2f2" stroke-width="1.1" fill="none"/><rect x="304.5" y="709" width="2" height="2" fill="#d84a2a"/><rect x="307" y="709" width="2" height="2" fill="#58a828"/><rect x="304.5" y="711.5" width="2" height="2" fill="#2a8ad8"/><rect x="307" y="711.5" width="2" height="2" fill="#e8b820"/><rect x="326" y="706.5" width="12" height="8.5" rx="0.8" fill="#2a8ad8"/><path d="M326 706.8 L332 711 L338 706.8" stroke="#9fd0f4" stroke-width="1" fill="none"/><circle cx="356.5" cy="710" r="5.4" fill="#a8c838"/><path d="M353 712 C355 706 359 706 360 709 M355 714 C357 711 359 711 360 712" stroke="#f4f8e0" stroke-width="1.2" fill="none"/><ellipse cx="381" cy="708.5" rx="5.5" ry="3.3" fill="#e8e8ee"/><circle cx="378.5" cy="712.5" r="1.8" fill="#d84040"/><path d="M380 710 L385 714.5" stroke="#4a8ad8" stroke-width="1.3"/><rect x="400.25" y="704.75" width="10.5" height="10.5" rx="1" fill="#4aa820"/><text x="405.5" y="712.6" font-size="7.5" font-weight="bold" text-anchor="middle" fill="#fff" font-family="Liberation Sans, sans-serif">C</text><rect x="425.25" y="704.75" width="10.5" height="10.5" rx="1" fill="#e85830"/><text x="430.5" y="712.6" font-size="7.5" font-weight="bold" text-anchor="middle" fill="#fff" font-family="Liberation Sans, sans-serif">C</text><rect x="450" y="705" width="10" height="10" fill="#0e0e10" stroke="#e8e8e8" stroke-width="0.9"/><path d="M452.7 712.8 L455 707 L457.3 712.8" stroke="#fff" stroke-width="1.1" fill="none"/><rect x="474.5" y="705" width="10" height="10" fill="#1f4a7a" stroke="#d8e4f0" stroke-width="0.9"/><path d="M477.2 712.8 L479.5 707 L481.8 712.8" stroke="#fff" stroke-width="1.1" fill="none"/><rect x="499.0" y="704.75" width="11" height="10.5" rx="1" fill="#8a2ab8"/><text x="504.5" y="712.6" font-size="7.5" font-weight="bold" text-anchor="middle" fill="#fff" font-family="Liberation Sans, sans-serif">N</text><rect x="523.5" y="706" width="8" height="8.5" rx="1" fill="#4a58c0"/><circle cx="532.5" cy="706.5" r="2" fill="#6a78d8"/><rect x="530" y="708.5" width="5" height="5.5" rx="1" fill="#6a78d8"/><text x="527.5" y="713" font-size="6.5" font-weight="bold" text-anchor="middle" fill="#fff" font-family="Liberation Sans, sans-serif">T</text><rect x="548.25" y="704.75" width="10.5" height="10.5" rx="1" fill="#e03a2a"/><text x="553.5" y="712.6" font-size="7.5" font-weight="bold" text-anchor="middle" fill="#fff" font-family="Liberation Sans, sans-serif">S</text><circle cx="579.5" cy="708.3" r="3.6" fill="none" stroke="#f08a20" stroke-width="1.7"/><path d="M577 711 L573.5 715" stroke="#f08a20" stroke-width="1.9"/><rect x="591" y="700" width="24.5" height="20" fill="#4b5a6b"/><rect x="591" y="718.6" width="24.5" height="1.4" fill="#8fc0ee"/><rect x="598.3" y="705" width="10" height="10" fill="#0e0e10" stroke="#d8d8d8" stroke-width="0.9"/><path d="M601.0 712.8 L603.3 707 L605.5999999999999 712.8" stroke="#fff" stroke-width="1.1" fill="none"/><circle cx="628" cy="710" r="5.5" fill="#d8482a"/><text x="628" y="712.8" font-size="7" font-weight="bold" text-anchor="middle" fill="#fff" font-family="Liberation Sans, sans-serif">P</text><rect x="100.0" y="718.8" width="19" height="1.2" fill="#7fb0e0"/><rect x="125.0" y="718.8" width="19" height="1.2" fill="#7fb0e0"/><rect x="149.5" y="718.8" width="19" height="1.2" fill="#7fb0e0"/><rect x="1237.8" y="677.5" width="26.2" height="22.5" fill="#fdfdfd" opacity="0.82"/><rect x="1237.8" y="700" width="26.2" height="3.6" fill="#c9cdd2"/><path d="M1244.8 697.8 L1250.4 684.2 L1256.2 697.8" stroke="#3e3e40" stroke-width="2.1" fill="none"/></svg>
<div id="txt" style="filter:blur(0.3px)">
<span class="t" style="left:499px;top:3.62px;font-size:9.3px;line-height:11.16px;color:#1c2430;transform:scaleX(0.9240);">Allplan 2021 - Bridge Example_BIM to CAD - 02_Bridge/Substructure/Foundations:DF2000 - Foundation Layout</span>
<span class="t" style="left:1177px;top:2.70px;font-size:8px;line-height:9.60px;color:#1a1a1a;transform:scaleX(0.8723);font-weight:bold">Login</span>
<span class="t" style="left:8px;top:19.14px;font-size:8.6px;line-height:10.32px;color:#1e1e1e;transform:scaleX(0.8298);">File</span>
<span class="t" style="left:30.5px;top:19.14px;font-size:8.6px;line-height:10.32px;color:#1e1e1e;transform:scaleX(0.9114);">Edit</span>
<span class="t" style="left:55px;top:19.14px;font-size:8.6px;line-height:10.32px;color:#1e1e1e;transform:scaleX(0.9197);">View</span>
<span class="t" style="left:82px;top:19.14px;font-size:8.6px;line-height:10.32px;color:#1e1e1e;transform:scaleX(0.8837);">Insert</span>
<span class="t" style="left:112px;top:19.14px;font-size:8.6px;line-height:10.32px;color:#1e1e1e;transform:scaleX(0.8450);">Format</span>
<span class="t" style="left:147px;top:19.14px;font-size:8.6px;line-height:10.32px;color:#1e1e1e;transform:scaleX(0.8474);">Tools</span>
<span class="t" style="left:176px;top:19.14px;font-size:8.6px;line-height:10.32px;color:#1e1e1e;transform:scaleX(0.8334);">Create</span>
<span class="t" style="left:208px;top:19.14px;font-size:8.6px;line-height:10.32px;color:#1e1e1e;transform:scaleX(0.8967);">Change</span>
<span class="t" style="left:246px;top:19.14px;font-size:8.6px;line-height:10.32px;color:#1e1e1e;transform:scaleX(0.8478);">Repeat</span>
<span class="t" style="left:280px;top:19.14px;font-size:8.6px;line-height:10.32px;color:#1e1e1e;transform:scaleX(0.9484);">Window</span>
<span class="t" style="left:321px;top:19.14px;font-size:8.6px;line-height:10.32px;color:#1e1e1e;transform:scaleX(0.6275);">?</span>
<span class="t" style="left:37.5px;top:37.24px;font-size:9.6px;line-height:11.52px;color:#1e1e1e;transform:scaleX(0.8860);">Modeling</span>
<span class="t" style="left:86px;top:37.24px;font-size:9.6px;line-height:11.52px;color:#1e1e1e;transform:scaleX(0.8000);">Elements</span>
<span class="t" style="left:132.5px;top:37.24px;font-size:9.6px;line-height:11.52px;color:#1e1e1e;transform:scaleX(0.8415);">Reinforcement</span>
<span class="t" style="left:199px;top:37.24px;font-size:9.6px;line-height:11.52px;color:#1e1e1e;transform:scaleX(0.8197);">Engineering Structures</span>
<span class="t" style="left:293px;top:37.24px;font-size:9.6px;line-height:11.52px;color:#1e1e1e;transform:scaleX(0.8607);">Objects</span>
<span class="t" style="left:336px;top:37.24px;font-size:9.6px;line-height:11.52px;color:#1e1e1e;transform:scaleX(0.8006);">Teamwork</span>
<span class="t" style="left:385.5px;top:37.24px;font-size:9.6px;line-height:11.52px;color:#1e1e1e;transform:scaleX(0.8286);">Visualization</span>
<span class="t" style="left:444.5px;top:37.24px;font-size:9.6px;line-height:11.52px;color:#1e1e1e;transform:scaleX(0.8223);">Layout Editor</span>
<span class="t" style="left:34px;top:88.96px;font-size:6.4px;line-height:7.68px;color:#66829f;transform:scaleX(0.9195);">2D Modeling</span>
<span class="t" style="left:212px;top:88.96px;font-size:6.4px;line-height:7.68px;color:#66829f;transform:scaleX(0.9170);">3D Objects</span>
<span class="t" style="left:394px;top:88.96px;font-size:6.4px;line-height:7.68px;color:#66829f;transform:scaleX(0.9132);">Boolean Operators</span>
<span class="t" style="left:457px;top:88.96px;font-size:6.4px;line-height:7.68px;color:#66829f;transform:scaleX(0.9219);">Update</span>
<span class="t" style="left:488px;top:88.96px;font-size:6.4px;line-height:7.68px;color:#66829f;transform:scaleX(0.8974);">Sections</span>
<span class="t" style="left:530px;top:88.96px;font-size:6.4px;line-height:7.68px;color:#66829f;transform:scaleX(0.8603);">Quick Access</span>
<span class="t" style="left:620px;top:88.96px;font-size:6.4px;line-height:7.68px;color:#7d8794;transform:scaleX(1.1165);">Change</span>
<span class="t" style="left:743px;top:88.96px;font-size:6.4px;line-height:7.68px;color:#7d8794;transform:scaleX(0.9078);">Edit</span>
<span class="t" style="left:818px;top:88.96px;font-size:6.4px;line-height:7.68px;color:#7d8794;transform:scaleX(0.8844);">Measure</span>
<span class="t" style="left:870px;top:88.96px;font-size:6.4px;line-height:7.68px;color:#7d8794;transform:scaleX(0.9773);">Annotations</span>
<span class="t" style="left:929px;top:88.96px;font-size:6.4px;line-height:7.68px;color:#7d8794;transform:scaleX(1.0370);">Attributes</span>
<span class="t" style="left:991px;top:88.96px;font-size:6.4px;line-height:7.68px;color:#7d8794;transform:scaleX(0.8449);">Filter</span>
<span class="t" style="left:1045px;top:88.96px;font-size:6.4px;line-height:7.68px;color:#7d8794;transform:scaleX(0.9151);">Work Environment</span>
<span class="t" style="left:689px;top:101.64px;font-size:8.6px;line-height:10.32px;color:#6f7f90;transform:scaleX(1.0342);">Front Left, Southwest Isometric View:3</span>
<span class="t" style="left:3px;top:99.52px;font-size:7.8px;line-height:9.36px;color:#2a2a2a;transform:scaleX(0.9229);">Wizards</span>
<span class="t" style="left:8px;top:116.62px;font-size:7.8px;line-height:9.36px;color:#1e1e1e;transform:scaleX(0.9565);">Properties</span>
<span class="t" style="left:62px;top:116.62px;font-size:7.8px;line-height:9.36px;color:#1e1e1e;transform:scaleX(0.9227);">Library</span>
<span class="t" style="left:110px;top:116.62px;font-size:7.8px;line-height:9.36px;color:#1e1e1e;transform:scaleX(0.8972);">Layers</span>
<span class="t" style="left:154.5px;top:115.92px;font-size:7.8px;line-height:9.36px;color:#1e1e1e;transform:scaleX(0.9407);">Wizards</span>
<span class="t" style="left:203.5px;top:116.62px;font-size:7.8px;line-height:9.36px;color:#1e1e1e;transform:scaleX(1.0024);">Objects</span>
<span class="t" style="left:6.3px;top:133.12px;font-size:7.8px;line-height:9.36px;color:#1e1e1e;transform:scaleX(0.9143);">Sub. Pier Layers</span>
<span class="t" style="left:218.5px;top:139.64px;font-size:7.6px;line-height:9.12px;color:#777;transform:scaleX(1.0097);">Objects</span>
<span class="t" style="left:15px;top:270.74px;font-size:7.6px;line-height:9.12px;color:#1f1f1f;transform:scaleX(1.0033);font-style:italic">Sub_Pier_Footing</span>
<span class="t" style="left:52px;top:285.14px;font-size:7.6px;line-height:9.12px;color:#1f1f1f;transform:scaleX(0.9930);font-style:italic">Str_Sub_Pier_Footing_Ex_Conc</span>
<span class="t" style="left:52px;top:299.64px;font-size:7.6px;line-height:9.12px;color:#1f1f1f;transform:scaleX(0.9924);font-style:italic">Str_Sub_Pier_Footing_Ex_Conc_Hidden</span>
<span class="t" style="left:52px;top:314.84px;font-size:7.6px;line-height:9.12px;color:#1f1f1f;transform:scaleX(0.9936);font-style:italic">Str_Sub_Pier_Footing_Ex_Rebar</span>
<span class="t" style="left:52px;top:329.24px;font-size:7.6px;line-height:9.12px;color:#1f1f1f;transform:scaleX(0.9954);font-style:italic">Str_Sub_Pier_Footing_Pr_Conc</span>
<span class="t" style="left:52px;top:343.64px;font-size:7.6px;line-height:9.12px;color:#1f1f1f;transform:scaleX(0.9943);font-style:italic">Str_Sub_Pier_Footing_Pr_Conc_Hidden</span>
<span class="t" style="left:52px;top:358.04px;font-size:7.6px;line-height:9.12px;color:#1f1f1f;transform:scaleX(0.9959);font-style:italic">Str_Sub_Pier_Footing_Pr_Rebar</span>
<span class="t" style="left:15px;top:386.04px;font-size:7.6px;line-height:9.12px;color:#1f1f1f;transform:scaleX(0.9932);font-style:italic">Sub_Pier_Footing_Sub</span>
<span class="t" style="left:52px;top:401.04px;font-size:7.6px;line-height:9.12px;color:#1f1f1f;transform:scaleX(0.9961);font-style:italic">Str_Sub_Pier_Footing_Sub_Ex_Conc</span>
<span class="t" style="left:52px;top:416.04px;font-size:7.6px;line-height:9.12px;color:#1f1f1f;transform:scaleX(0.9886);font-style:italic">Str_Sub_Pier_Footing_Sub_Ex_Conc_Hidden</span>
<span class="t" style="left:52px;top:430.54px;font-size:7.6px;line-height:9.12px;color:#1f1f1f;transform:scaleX(0.9981);font-style:italic">Str_Sub_Pier_Footing_Sub_Pr_Conc</span>
<span class="t" style="left:52px;top:444.74px;font-size:7.6px;line-height:9.12px;color:#1f1f1f;transform:scaleX(0.9902);font-style:italic">Str_Sub_Pier_Footing_Sub_Pr_Conc_Hidden</span>
<span class="t" style="left:15px;top:472.94px;font-size:7.6px;line-height:9.12px;color:#1f1f1f;transform:scaleX(0.9991);font-style:italic">Sub_Pier_Footing_Tremie</span>
<span class="t" style="left:52px;top:487.74px;font-size:7.6px;line-height:9.12px;color:#1f1f1f;transform:scaleX(0.9924);font-style:italic">Str_Sub_Pier_Footing_Tremie_Ex_Conc</span>
<span class="t" style="left:52px;top:502.44px;font-size:7.6px;line-height:9.12px;color:#1f1f1f;transform:scaleX(0.9920);font-style:italic">Str_Sub_Pier_Footing_Tremie_Ex_Conc_Hidden</span>
<span class="t" style="left:52px;top:516.94px;font-size:7.6px;line-height:9.12px;color:#1f1f1f;transform:scaleX(0.9942);font-style:italic">Str_Sub_Pier_Footing_Tremie_Pr_Conc</span>
<span class="t" style="left:52px;top:531.44px;font-size:7.6px;line-height:9.12px;color:#1f1f1f;transform:scaleX(0.9935);font-style:italic">Str_Sub_Pier_Footing_Tremie_Pr_Conc_Hidden</span>
<span class="t" style="left:9px;top:671.84px;font-size:8.6px;line-height:10.32px;color:#101010;transform:scaleX(0.9354);font-weight:bold">Click left to select, Ctrl+click to add, Shift+click to select entity group</span>
<span class="t" style="left:1px;top:690.44px;font-size:7.6px;line-height:9.12px;color:#5a5a5a;transform:scaleX(0.9952);">Press F1 to get Help.</span>
<span class="t" style="left:666px;top:690.44px;font-size:7.6px;line-height:9.12px;color:#6a6a6a;transform:scaleX(1.0800);">Country:</span>
<span class="t" style="left:703px;top:690.44px;font-size:7.6px;line-height:9.12px;color:#6a6a6a;transform:scaleX(0.8960);">USA</span>
<span class="t" style="left:801px;top:690.44px;font-size:7.6px;line-height:9.12px;color:#6a6a6a;transform:scaleX(1.0336);">Drawing type:</span>
<span class="t" style="left:855px;top:690.44px;font-size:7.6px;line-height:9.12px;color:#1a1a1a;transform:scaleX(1.0482);">Scale definition</span>
<span class="t" style="left:1014px;top:690.44px;font-size:7.6px;line-height:9.12px;color:#6a6a6a;transform:scaleX(0.9474);">Scale:</span>
<span class="t" style="left:1040px;top:690.44px;font-size:7.6px;line-height:9.12px;color:#6a6a6a;transform:scaleX(0.9800);">1/2&quot;</span>
<span class="t" style="left:1059px;top:690.44px;font-size:7.6px;line-height:9.12px;color:#333;transform:scaleX(0.8833);">SCALE</span>
<span class="t" style="left:1085px;top:690.44px;font-size:7.6px;line-height:9.12px;color:#6a6a6a;transform:scaleX(0.9864);">Length:</span>
<span class="t" style="left:1117px;top:690.44px;font-size:7.6px;line-height:9.12px;color:#6a6a6a;transform:scaleX(1.1172);">&#x27; &quot;</span>
<span class="t" style="left:1151px;top:690.44px;font-size:7.6px;line-height:9.12px;color:#6a6a6a;transform:scaleX(1.0210);">Angle:</span>
<span class="t" style="left:1178px;top:690.44px;font-size:7.6px;line-height:9.12px;color:#333;transform:scaleX(0.9992);">0.000</span>
<span class="t" style="left:1210px;top:690.44px;font-size:7.6px;line-height:9.12px;color:#333;transform:scaleX(1.0259);">deg</span>
<span class="t" style="left:1245px;top:706.06px;font-size:7.4px;line-height:8.88px;color:#f0f0f0;transform:scaleX(1.0170);">4:10 PM</span>
</div>
<svg class="a" style="left:0;top:0;filter:blur(0.3px)" width="1279" height="160" viewBox="0 0 1279 160"><circle cx="640" cy="45.6" r="16" fill="#36383c" opacity="0.93"/><path d="M633.6 39.2 L646.4 52 M646.4 39.2 L633.6 52" stroke="#f4f4f4" stroke-width="1.5"/><path d="M212.8 123.2 V133.6 L215.3 131.4 L217.2 135.6 L218.9 134.8 L217.1 130.8 L220.3 130.6Z" fill="#fff" stroke="#1a1a1a" stroke-width="0.8"/></svg>
</body></html>
